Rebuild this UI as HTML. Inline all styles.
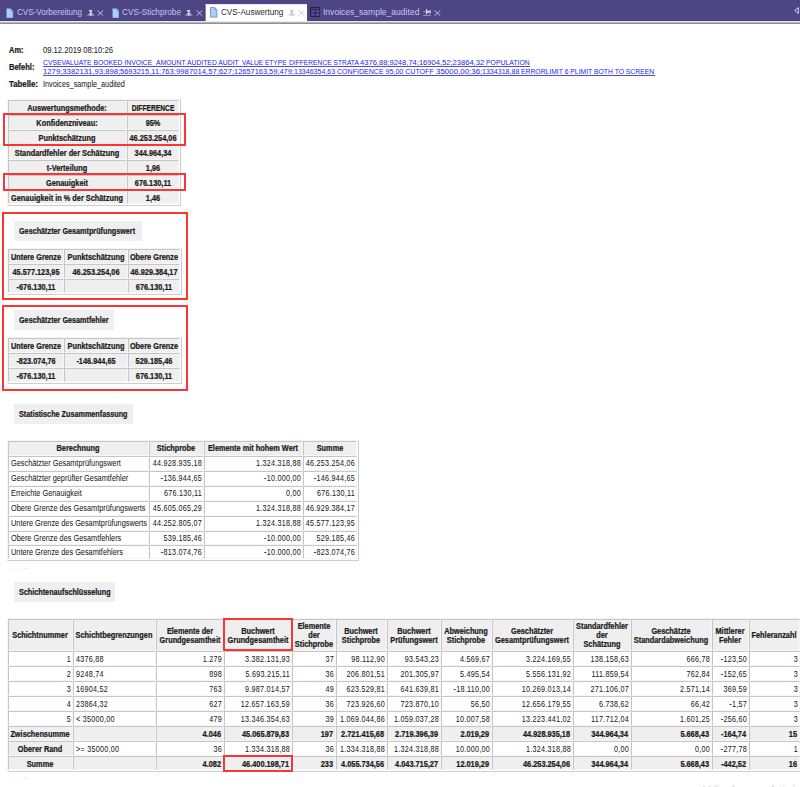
<!DOCTYPE html><html><head><meta charset="utf-8"><style>
html,body{margin:0;padding:0;background:#fff;width:800px;height:787px;overflow:hidden;position:relative}
.t{position:absolute;white-space:pre;font-family:"Liberation Sans",sans-serif;color:#1b1b1b}
.k{-webkit-text-stroke:0.24px currentColor}
.r{-webkit-text-stroke:0.04px currentColor}
.b{position:absolute;box-sizing:content-box}
svg{position:absolute}
</style></head><body>
<div class="b" style="left:0px;top:0px;width:800px;height:21px;background:#4e4584;"></div>
<div class="b" style="left:0px;top:20px;width:800px;height:1px;background:#473f7d;"></div>
<div class="b" style="left:0px;top:22px;width:800px;height:1px;background:#b4b4b4;"></div>
<div class="b" style="left:0px;top:23px;width:800px;height:1px;background:#8f8f8f;"></div>
<div class="b" style="left:205px;top:3.6px;width:102px;height:17.4px;background:#fff;border-left:1px solid #8a82b0;border-top:1px solid #e6e4ee;box-sizing:border-box;"></div>
<div class="b" style="left:0px;top:21px;width:800px;height:1px;background:#ebeaf0;"></div>
<svg style="left:6.40px;top:7.50px" width="7.5" height="10.6" viewBox="0 0 7.5 10.6"><path d="M0.5 0.5 H4.7 L7 2.8 V10.1 H0.5 Z" fill="#a9d1f5" stroke="#6c7cc0" stroke-width="0.75"/><path d="M4.6 0.6 V2.9 H6.9 Z" fill="#7d8cc8"/></svg>
<div class="t r" style="left:17px;top:6.95px;font-size:8.5px;line-height:10.20px;color:#c9c5ee;transform:scaleX(0.9486281377699942);transform-origin:0 0;-webkit-text-stroke:0;">CVS-Vorbereitung</div>
<svg style="left:86.6px;top:10px" width="8" height="6" viewBox="0 0 8 6"><path d="M1.7 0 H5.5 L4.7 1.7 H2.5 Z" fill="#d9d6ee"/><rect x="3" y="1.5" width="1.6" height="4.3" fill="#d9d6ee"/><path d="M2.2 2.9 H5.4 L7.9 5.8 H-0.3 Z" fill="#d9d6ee" opacity="0.55"/></svg>
<svg style="left:97.3px;top:9.60px" width="7" height="6.5" viewBox="0 0 7 6.5"><path d="M0.5 0.5 L6.3 5.8 M6.3 0.5 L0.5 5.8" stroke="#d9d6ee" stroke-width="1" opacity="0.85"/></svg>
<svg style="left:111.60px;top:7.50px" width="7.5" height="10.6" viewBox="0 0 7.5 10.6"><path d="M0.5 0.5 H4.7 L7 2.8 V10.1 H0.5 Z" fill="#a9d1f5" stroke="#6c7cc0" stroke-width="0.75"/><path d="M4.6 0.6 V2.9 H6.9 Z" fill="#7d8cc8"/></svg>
<div class="t r" style="left:122px;top:6.95px;font-size:8.5px;line-height:10.20px;color:#c9c5ee;transform:scaleX(0.9680065627563577);transform-origin:0 0;-webkit-text-stroke:0;">CVS-Stichprobe</div>
<svg style="left:185px;top:10px" width="8" height="6" viewBox="0 0 8 6"><path d="M1.7 0 H5.5 L4.7 1.7 H2.5 Z" fill="#d9d6ee"/><rect x="3" y="1.5" width="1.6" height="4.3" fill="#d9d6ee"/><path d="M2.2 2.9 H5.4 L7.9 5.8 H-0.3 Z" fill="#d9d6ee" opacity="0.55"/></svg>
<svg style="left:196px;top:9.60px" width="7" height="6.5" viewBox="0 0 7 6.5"><path d="M0.5 0.5 L6.3 5.8 M6.3 0.5 L0.5 5.8" stroke="#d9d6ee" stroke-width="1" opacity="0.85"/></svg>
<svg style="left:210.00px;top:7.30px" width="7.5" height="10.6" viewBox="0 0 7.5 10.6"><path d="M0.5 0.5 H4.7 L7 2.8 V10.1 H0.5 Z" fill="#a9d1f5" stroke="#6c7cc0" stroke-width="0.75"/><path d="M4.6 0.6 V2.9 H6.9 Z" fill="#7d8cc8"/></svg>
<div class="t r" style="left:220.8px;top:6.95px;font-size:8.5px;line-height:10.20px;color:#2c2c2c;transform:scaleX(0.9570552147239263);transform-origin:0 0;-webkit-text-stroke:0;">CVS-Auswertung</div>
<svg style="left:287.5px;top:10px" width="8" height="6" viewBox="0 0 8 6"><path d="M1.7 0 H5.5 L4.7 1.7 H2.5 Z" fill="#c4c4c4"/><rect x="3" y="1.5" width="1.6" height="4.3" fill="#c4c4c4"/><path d="M2.2 2.9 H5.4 L7.9 5.8 H-0.3 Z" fill="#c4c4c4" opacity="0.55"/></svg>
<svg style="left:298.2px;top:9.60px" width="7" height="6.5" viewBox="0 0 7 6.5"><path d="M0.5 0.5 L6.3 5.8 M6.3 0.5 L0.5 5.8" stroke="#c8c8c8" stroke-width="1" opacity="0.85"/></svg>
<svg style="left:309.8px;top:6.9px" width="10.5" height="10" viewBox="0 0 10.5 10"><rect x="0.6" y="0.6" width="9.3" height="8.8" rx="0.8" fill="#5a50a0" stroke="#26224a" stroke-width="1.1"/><path d="M0.6 2.6 H9.9 M0.6 6 H9.9 M5.25 2.6 V9.4" stroke="#26224a" stroke-width="1"/></svg>
<div class="t r" style="left:322.9px;top:6.95px;font-size:8.5px;line-height:10.20px;color:#c9c5ee;transform:scaleX(1.0047946633312488);transform-origin:0 0;-webkit-text-stroke:0;">Invoices_sample_audited</div>
<svg style="left:423px;top:9px" width="8" height="7" viewBox="0 0 8 7"><g fill="#dcdcec"><rect x="0" y="2.3" width="3" height="0.9" opacity="0.6"/><rect x="3" y="0" width="1.1" height="5"/><rect x="4" y="1.9" width="2.6" height="1.8"/><rect x="6.5" y="1" width="1.2" height="3.5"/><rect x="0.2" y="5.8" width="7.6" height="1" opacity="0.6"/></g></svg>
<svg style="left:434px;top:9.60px" width="7" height="6.5" viewBox="0 0 7 6.5"><path d="M0.5 0.5 L6.3 5.8 M6.3 0.5 L0.5 5.8" stroke="#d9d6ee" stroke-width="1" opacity="0.85"/></svg>
<svg style="left:793.5px;top:6.5px" width="5" height="7" viewBox="0 0 5 7"><path d="M4.3 0.6 V6.4 L0.7 3.5 Z" fill="none" stroke="#e8e6f4" stroke-width="0.9"/></svg>
<div class="t k" style="left:9px;top:46.04px;font-size:8.2px;line-height:9.84px;font-weight:700;transform:scaleX(0.9091479089598095);transform-origin:0 0;">Am:</div>
<div class="t r" style="left:42.5px;top:46.04px;font-size:8.2px;line-height:9.84px;color:#202020;transform:scaleX(0.9302912808449704);transform-origin:0 0;">09.12.2019 08:10:26</div>
<div class="t k" style="left:9px;top:63.04px;font-size:8.2px;line-height:9.84px;font-weight:700;transform:scaleX(0.9173321821713792);transform-origin:0 0;">Befehl:</div>
<div class="t r" style="left:42.75px;top:57.65px;font-size:7.5px;line-height:9.00px;color:#2626e6;transform:scaleX(0.9065606361829026);transform-origin:0 0;-webkit-text-stroke:0;">CVSEVALUATE BOOKED INVOICE_AMOUNT AUDITED AUDIT_</div>
<div class="t r" style="left:242.25px;top:57.65px;font-size:7.5px;line-height:9.00px;color:#2626e6;transform:scaleX(0.8778928677123413);transform-origin:0 0;-webkit-text-stroke:0;">VALUE ETYPE </div>
<div class="t r" style="left:288.6px;top:57.65px;font-size:7.5px;line-height:9.00px;color:#2626e6;transform:scaleX(0.8907602339181284);transform-origin:0 0;-webkit-text-stroke:0;">DIFFERENCE STRATA </div>
<div class="t r" style="left:360px;top:57.65px;font-size:7.5px;line-height:9.00px;color:#2626e6;transform:scaleX(1.008991008991009);transform-origin:0 0;-webkit-text-stroke:0;">4376,88;9248,74;16904,52;23864,32 </div>
<div class="t r" style="left:486.25px;top:57.65px;font-size:7.5px;line-height:9.00px;color:#2626e6;transform:scaleX(0.9153318077803204);transform-origin:0 0;-webkit-text-stroke:0;">POPULATION</div>
<div class="t r" style="left:42.75px;top:67.30px;font-size:7.5px;line-height:9.00px;color:#2626e6;transform:scaleX(1.0289281997918835);transform-origin:0 0;-webkit-text-stroke:0;">1279;3382131,93;898;</div>
<div class="t r" style="left:120px;top:67.30px;font-size:7.5px;line-height:9.00px;color:#2626e6;-webkit-text-stroke:0;">5693215,11;763;</div>
<div class="t r" style="left:175.8px;top:67.30px;font-size:7.5px;line-height:9.00px;color:#2626e6;transform:scaleX(1.0317425083240843);transform-origin:0 0;-webkit-text-stroke:0;">9987014,57;627;</div>
<div class="t r" style="left:233.9px;top:67.30px;font-size:7.5px;line-height:9.00px;color:#2626e6;transform:scaleX(0.989511754068716);transform-origin:0 0;-webkit-text-stroke:0;">12657163,59;479;</div>
<div class="t r" style="left:293.75px;top:67.30px;font-size:7.5px;line-height:9.00px;color:#2626e6;transform:scaleX(0.9402791964589713);transform-origin:0 0;-webkit-text-stroke:0;">13346354,63 </div>
<div class="t r" style="left:336.9px;top:67.30px;font-size:7.5px;line-height:9.00px;color:#2626e6;transform:scaleX(0.9409801876955166);transform-origin:0 0;-webkit-text-stroke:0;">CONFIDENCE 95,00 CUTOFF </div>
<div class="t r" style="left:435.6px;top:67.30px;font-size:7.5px;line-height:9.00px;color:#2626e6;transform:scaleX(1.0571530503032456);transform-origin:0 0;-webkit-text-stroke:0;">35000,00;36;</div>
<div class="t r" style="left:481.9px;top:67.30px;font-size:7.5px;line-height:9.00px;color:#2626e6;transform:scaleX(0.943220973782772);transform-origin:0 0;-webkit-text-stroke:0;">1334318,88 </div>
<div class="t r" style="left:521.25px;top:67.30px;font-size:7.5px;line-height:9.00px;color:#2626e6;transform:scaleX(0.9058786010417772);transform-origin:0 0;-webkit-text-stroke:0;">ERRORLIMIT 6 PLIMIT BOTH TO SCREEN</div>
<div class="b" style="left:43px;top:66px;width:487px;height:1px;background:#4a4af0;"></div>
<div class="b" style="left:43px;top:75px;width:611.5px;height:1px;background:#4a4af0;"></div>
<div class="t k" style="left:9px;top:80.04px;font-size:8.2px;line-height:9.84px;font-weight:700;transform:scaleX(0.9545439583950497);transform-origin:0 0;">Tabelle:</div>
<div class="t r" style="left:42.5px;top:80.04px;font-size:8.2px;line-height:9.84px;color:#202020;transform:scaleX(0.8861320336730174);transform-origin:0 0;">Invoices_sample_audited</div>
<div class="b" style="left:7px;top:99px;width:172px;height:105px;border-top:1px solid #f4f4f4;border-left:1px solid #f4f4f4;border-right:1px solid #cdcdcd;border-bottom:1px solid #cdcdcd;"></div>
<div class="b" style="left:8px;top:100px;width:117px;height:13px;background:#efefef;border-top:1px solid #c6c6c6;border-left:1px solid #c6c6c6;border-right:1px solid #f6f6f6;border-bottom:1px solid #f6f6f6;"></div>
<div class="t k" style="left:-233.00px;top:104.04px;font-size:8.2px;line-height:9.84px;font-weight:700;width:600px;text-align:center;transform:scaleX(0.8975609756097562);transform-origin:50% 0;">Auswertungsmethode:</div>
<div class="b" style="left:127px;top:100px;width:50px;height:13px;background:#efefef;border-top:1px solid #c6c6c6;border-left:1px solid #c6c6c6;border-right:1px solid #f6f6f6;border-bottom:1px solid #f6f6f6;"></div>
<div class="t k" style="left:-147.50px;top:104.04px;font-size:8.2px;line-height:9.84px;font-weight:700;width:600px;text-align:center;transform:scaleX(0.8167804878048782);transform-origin:50% 0;">DIFFERENCE</div>
<div class="b" style="left:8px;top:115px;width:117px;height:13px;background:#efefef;border-top:1px solid #c6c6c6;border-left:1px solid #c6c6c6;border-right:1px solid #f6f6f6;border-bottom:1px solid #f6f6f6;"></div>
<div class="t k" style="left:-233.00px;top:119.04px;font-size:8.2px;line-height:9.84px;font-weight:700;width:600px;text-align:center;transform:scaleX(0.8975609756097562);transform-origin:50% 0;">Konfidenzniveau:</div>
<div class="b" style="left:127px;top:115px;width:50px;height:13px;background:#efefef;border-top:1px solid #c6c6c6;border-left:1px solid #c6c6c6;border-right:1px solid #f6f6f6;border-bottom:1px solid #f6f6f6;"></div>
<div class="t k" style="left:-147.50px;top:119.04px;font-size:8.2px;line-height:9.84px;font-weight:700;width:600px;text-align:center;transform:scaleX(0.8975609756097562);transform-origin:50% 0;">95%</div>
<div class="b" style="left:8px;top:130px;width:117px;height:13px;background:#efefef;border-top:1px solid #c6c6c6;border-left:1px solid #c6c6c6;border-right:1px solid #f6f6f6;border-bottom:1px solid #f6f6f6;"></div>
<div class="t k" style="left:-233.00px;top:134.04px;font-size:8.2px;line-height:9.84px;font-weight:700;width:600px;text-align:center;transform:scaleX(0.8975609756097562);transform-origin:50% 0;">Punktschätzung</div>
<div class="b" style="left:127px;top:130px;width:50px;height:13px;background:#efefef;border-top:1px solid #c6c6c6;border-left:1px solid #c6c6c6;border-right:1px solid #f6f6f6;border-bottom:1px solid #f6f6f6;"></div>
<div class="t k" style="left:-147.50px;top:134.04px;font-size:8.2px;line-height:9.84px;font-weight:700;width:600px;text-align:center;transform:scaleX(0.8975609756097562);transform-origin:50% 0;">46.253.254,06</div>
<div class="b" style="left:8px;top:145px;width:117px;height:13px;background:#efefef;border-top:1px solid #c6c6c6;border-left:1px solid #c6c6c6;border-right:1px solid #f6f6f6;border-bottom:1px solid #f6f6f6;"></div>
<div class="t k" style="left:-233.00px;top:149.04px;font-size:8.2px;line-height:9.84px;font-weight:700;width:600px;text-align:center;transform:scaleX(0.8975609756097562);transform-origin:50% 0;">Standardfehler der Schätzung</div>
<div class="b" style="left:127px;top:145px;width:50px;height:13px;background:#efefef;border-top:1px solid #c6c6c6;border-left:1px solid #c6c6c6;border-right:1px solid #f6f6f6;border-bottom:1px solid #f6f6f6;"></div>
<div class="t k" style="left:-147.50px;top:149.04px;font-size:8.2px;line-height:9.84px;font-weight:700;width:600px;text-align:center;transform:scaleX(0.8975609756097562);transform-origin:50% 0;">344.964,34</div>
<div class="b" style="left:8px;top:160px;width:117px;height:13px;background:#efefef;border-top:1px solid #c6c6c6;border-left:1px solid #c6c6c6;border-right:1px solid #f6f6f6;border-bottom:1px solid #f6f6f6;"></div>
<div class="t k" style="left:-233.00px;top:164.04px;font-size:8.2px;line-height:9.84px;font-weight:700;width:600px;text-align:center;transform:scaleX(0.8975609756097562);transform-origin:50% 0;">t-Verteilung</div>
<div class="b" style="left:127px;top:160px;width:50px;height:13px;background:#efefef;border-top:1px solid #c6c6c6;border-left:1px solid #c6c6c6;border-right:1px solid #f6f6f6;border-bottom:1px solid #f6f6f6;"></div>
<div class="t k" style="left:-147.50px;top:164.04px;font-size:8.2px;line-height:9.84px;font-weight:700;width:600px;text-align:center;transform:scaleX(0.8975609756097562);transform-origin:50% 0;">1,96</div>
<div class="b" style="left:8px;top:175px;width:117px;height:13px;background:#efefef;border-top:1px solid #c6c6c6;border-left:1px solid #c6c6c6;border-right:1px solid #f6f6f6;border-bottom:1px solid #f6f6f6;"></div>
<div class="t k" style="left:-233.00px;top:179.04px;font-size:8.2px;line-height:9.84px;font-weight:700;width:600px;text-align:center;transform:scaleX(0.8975609756097562);transform-origin:50% 0;">Genauigkeit</div>
<div class="b" style="left:127px;top:175px;width:50px;height:13px;background:#efefef;border-top:1px solid #c6c6c6;border-left:1px solid #c6c6c6;border-right:1px solid #f6f6f6;border-bottom:1px solid #f6f6f6;"></div>
<div class="t k" style="left:-147.50px;top:179.04px;font-size:8.2px;line-height:9.84px;font-weight:700;width:600px;text-align:center;transform:scaleX(0.8975609756097562);transform-origin:50% 0;">676.130,11</div>
<div class="b" style="left:8px;top:190px;width:117px;height:12px;background:#efefef;border-top:1px solid #c6c6c6;border-left:1px solid #c6c6c6;border-right:1px solid #f6f6f6;border-bottom:1px solid #f6f6f6;"></div>
<div class="t k" style="left:-233.00px;top:194.04px;font-size:8.2px;line-height:9.84px;font-weight:700;width:600px;text-align:center;transform:scaleX(0.8975609756097562);transform-origin:50% 0;">Genauigkeit in % der Schätzung</div>
<div class="b" style="left:127px;top:190px;width:50px;height:12px;background:#efefef;border-top:1px solid #c6c6c6;border-left:1px solid #c6c6c6;border-right:1px solid #f6f6f6;border-bottom:1px solid #f6f6f6;"></div>
<div class="t k" style="left:-147.50px;top:194.04px;font-size:8.2px;line-height:9.84px;font-weight:700;width:600px;text-align:center;transform:scaleX(0.8975609756097562);transform-origin:50% 0;">1,46</div>
<div class="b" style="left:3px;top:113px;width:179px;height:29px;border:2px solid #fb3434;"></div>
<div class="b" style="left:3px;top:173px;width:179px;height:14px;border:2px solid #fb3434;"></div>
<div class="b" style="left:2px;top:212px;width:182px;height:84px;border:2px solid #fb3434;"></div>
<div class="b" style="left:14px;top:221px;width:128px;height:20px;background:#efefef;"></div>
<div class="t k" style="left:19px;top:227.04px;font-size:8.2px;line-height:9.84px;font-weight:700;transform:scaleX(0.8829268292682928);transform-origin:0 0;">Geschätzter Gesamtprüfungswert</div>
<div class="b" style="left:7px;top:248px;width:173px;height:45px;border-top:1px solid #f4f4f4;border-left:1px solid #f4f4f4;border-right:1px solid #cdcdcd;border-bottom:1px solid #cdcdcd;"></div>
<div class="b" style="left:8px;top:249px;width:54px;height:13px;background:#efefef;border-top:1px solid #c6c6c6;border-left:1px solid #c6c6c6;border-right:1px solid #f6f6f6;border-bottom:1px solid #f6f6f6;"></div>
<div class="t k" style="left:-264.50px;top:253.04px;font-size:8.2px;line-height:9.84px;font-weight:700;width:600px;text-align:center;transform:scaleX(0.8975609756097562);transform-origin:50% 0;">Untere Grenze</div>
<div class="b" style="left:64px;top:249px;width:62px;height:13px;background:#efefef;border-top:1px solid #c6c6c6;border-left:1px solid #c6c6c6;border-right:1px solid #f6f6f6;border-bottom:1px solid #f6f6f6;"></div>
<div class="t k" style="left:-204.50px;top:253.04px;font-size:8.2px;line-height:9.84px;font-weight:700;width:600px;text-align:center;transform:scaleX(0.8975609756097562);transform-origin:50% 0;">Punktschätzung</div>
<div class="b" style="left:128px;top:249px;width:50px;height:13px;background:#efefef;border-top:1px solid #c6c6c6;border-left:1px solid #c6c6c6;border-right:1px solid #f6f6f6;border-bottom:1px solid #f6f6f6;"></div>
<div class="t k" style="left:-146.50px;top:253.04px;font-size:8.2px;line-height:9.84px;font-weight:700;width:600px;text-align:center;transform:scaleX(0.8975609756097562);transform-origin:50% 0;">Obere Grenze</div>
<div class="b" style="left:8px;top:264px;width:54px;height:13px;background:#efefef;border-top:1px solid #c6c6c6;border-left:1px solid #c6c6c6;border-right:1px solid #f6f6f6;border-bottom:1px solid #f6f6f6;"></div>
<div class="t k" style="left:-264.50px;top:268.04px;font-size:8.2px;line-height:9.84px;font-weight:700;width:600px;text-align:center;transform:scaleX(0.8975609756097562);transform-origin:50% 0;">45.577.123,95</div>
<div class="b" style="left:64px;top:264px;width:62px;height:13px;background:#efefef;border-top:1px solid #c6c6c6;border-left:1px solid #c6c6c6;border-right:1px solid #f6f6f6;border-bottom:1px solid #f6f6f6;"></div>
<div class="t k" style="left:-204.50px;top:268.04px;font-size:8.2px;line-height:9.84px;font-weight:700;width:600px;text-align:center;transform:scaleX(0.8975609756097562);transform-origin:50% 0;">46.253.254,06</div>
<div class="b" style="left:128px;top:264px;width:50px;height:13px;background:#efefef;border-top:1px solid #c6c6c6;border-left:1px solid #c6c6c6;border-right:1px solid #f6f6f6;border-bottom:1px solid #f6f6f6;"></div>
<div class="t k" style="left:-146.50px;top:268.04px;font-size:8.2px;line-height:9.84px;font-weight:700;width:600px;text-align:center;transform:scaleX(0.8975609756097562);transform-origin:50% 0;">46.929.384,17</div>
<div class="b" style="left:8px;top:279px;width:54px;height:12px;background:#efefef;border-top:1px solid #c6c6c6;border-left:1px solid #c6c6c6;border-right:1px solid #f6f6f6;border-bottom:1px solid #f6f6f6;"></div>
<div class="t k" style="left:-264.50px;top:283.04px;font-size:8.2px;line-height:9.84px;font-weight:700;width:600px;text-align:center;transform:scaleX(0.8975609756097562);transform-origin:50% 0;">-676.130,11</div>
<div class="b" style="left:64px;top:279px;width:62px;height:12px;background:#efefef;border-top:1px solid #c6c6c6;border-left:1px solid #c6c6c6;border-right:1px solid #f6f6f6;border-bottom:1px solid #f6f6f6;"></div>
<div class="b" style="left:128px;top:279px;width:50px;height:12px;background:#efefef;border-top:1px solid #c6c6c6;border-left:1px solid #c6c6c6;border-right:1px solid #f6f6f6;border-bottom:1px solid #f6f6f6;"></div>
<div class="t k" style="left:-146.50px;top:283.04px;font-size:8.2px;line-height:9.84px;font-weight:700;width:600px;text-align:center;transform:scaleX(0.8975609756097562);transform-origin:50% 0;">676.130,11</div>
<div class="b" style="left:2px;top:305px;width:182px;height:82px;border:2px solid #fb3434;"></div>
<div class="b" style="left:14px;top:310px;width:100px;height:19.5px;background:#efefef;"></div>
<div class="t k" style="left:19px;top:316.04px;font-size:8.2px;line-height:9.84px;font-weight:700;transform:scaleX(0.8829268292682928);transform-origin:0 0;">Geschätzter Gesamtfehler</div>
<div class="b" style="left:7px;top:337px;width:173px;height:45px;border-top:1px solid #f4f4f4;border-left:1px solid #f4f4f4;border-right:1px solid #cdcdcd;border-bottom:1px solid #cdcdcd;"></div>
<div class="b" style="left:8px;top:338px;width:54px;height:13px;background:#efefef;border-top:1px solid #c6c6c6;border-left:1px solid #c6c6c6;border-right:1px solid #f6f6f6;border-bottom:1px solid #f6f6f6;"></div>
<div class="t k" style="left:-264.50px;top:342.04px;font-size:8.2px;line-height:9.84px;font-weight:700;width:600px;text-align:center;transform:scaleX(0.8975609756097562);transform-origin:50% 0;">Untere Grenze</div>
<div class="b" style="left:64px;top:338px;width:62px;height:13px;background:#efefef;border-top:1px solid #c6c6c6;border-left:1px solid #c6c6c6;border-right:1px solid #f6f6f6;border-bottom:1px solid #f6f6f6;"></div>
<div class="t k" style="left:-204.50px;top:342.04px;font-size:8.2px;line-height:9.84px;font-weight:700;width:600px;text-align:center;transform:scaleX(0.8975609756097562);transform-origin:50% 0;">Punktschätzung</div>
<div class="b" style="left:128px;top:338px;width:50px;height:13px;background:#efefef;border-top:1px solid #c6c6c6;border-left:1px solid #c6c6c6;border-right:1px solid #f6f6f6;border-bottom:1px solid #f6f6f6;"></div>
<div class="t k" style="left:-146.50px;top:342.04px;font-size:8.2px;line-height:9.84px;font-weight:700;width:600px;text-align:center;transform:scaleX(0.8975609756097562);transform-origin:50% 0;">Obere Grenze</div>
<div class="b" style="left:8px;top:353px;width:54px;height:13px;background:#efefef;border-top:1px solid #c6c6c6;border-left:1px solid #c6c6c6;border-right:1px solid #f6f6f6;border-bottom:1px solid #f6f6f6;"></div>
<div class="t k" style="left:-264.50px;top:357.04px;font-size:8.2px;line-height:9.84px;font-weight:700;width:600px;text-align:center;transform:scaleX(0.8975609756097562);transform-origin:50% 0;">-823.074,76</div>
<div class="b" style="left:64px;top:353px;width:62px;height:13px;background:#efefef;border-top:1px solid #c6c6c6;border-left:1px solid #c6c6c6;border-right:1px solid #f6f6f6;border-bottom:1px solid #f6f6f6;"></div>
<div class="t k" style="left:-204.50px;top:357.04px;font-size:8.2px;line-height:9.84px;font-weight:700;width:600px;text-align:center;transform:scaleX(0.8975609756097562);transform-origin:50% 0;">-146.944,65</div>
<div class="b" style="left:128px;top:353px;width:50px;height:13px;background:#efefef;border-top:1px solid #c6c6c6;border-left:1px solid #c6c6c6;border-right:1px solid #f6f6f6;border-bottom:1px solid #f6f6f6;"></div>
<div class="t k" style="left:-146.50px;top:357.04px;font-size:8.2px;line-height:9.84px;font-weight:700;width:600px;text-align:center;transform:scaleX(0.8975609756097562);transform-origin:50% 0;">529.185,46</div>
<div class="b" style="left:8px;top:368px;width:54px;height:12px;background:#efefef;border-top:1px solid #c6c6c6;border-left:1px solid #c6c6c6;border-right:1px solid #f6f6f6;border-bottom:1px solid #f6f6f6;"></div>
<div class="t k" style="left:-264.50px;top:372.04px;font-size:8.2px;line-height:9.84px;font-weight:700;width:600px;text-align:center;transform:scaleX(0.8975609756097562);transform-origin:50% 0;">-676.130,11</div>
<div class="b" style="left:64px;top:368px;width:62px;height:12px;background:#efefef;border-top:1px solid #c6c6c6;border-left:1px solid #c6c6c6;border-right:1px solid #f6f6f6;border-bottom:1px solid #f6f6f6;"></div>
<div class="b" style="left:128px;top:368px;width:50px;height:12px;background:#efefef;border-top:1px solid #c6c6c6;border-left:1px solid #c6c6c6;border-right:1px solid #f6f6f6;border-bottom:1px solid #f6f6f6;"></div>
<div class="t k" style="left:-146.50px;top:372.04px;font-size:8.2px;line-height:9.84px;font-weight:700;width:600px;text-align:center;transform:scaleX(0.8975609756097562);transform-origin:50% 0;">676.130,11</div>
<div class="b" style="left:14px;top:404px;width:119px;height:20px;background:#efefef;"></div>
<div class="t k" style="left:19px;top:410.04px;font-size:8.2px;line-height:9.84px;font-weight:700;transform:scaleX(0.8829268292682928);transform-origin:0 0;">Statistische Zusammenfassung</div>
<div class="b" style="left:7px;top:440px;width:350px;height:119px;border-top:1px solid #f4f4f4;border-left:1px solid #f4f4f4;border-right:1px solid #cdcdcd;border-bottom:1px solid #cdcdcd;"></div>
<div class="b" style="left:8px;top:441px;width:139px;height:13px;background:#efefef;border-top:1px solid #c6c6c6;border-left:1px solid #c6c6c6;border-right:1px solid #f6f6f6;border-bottom:1px solid #f6f6f6;"></div>
<div class="t k" style="left:-222.00px;top:444.04px;font-size:8.2px;line-height:9.84px;font-weight:700;width:600px;text-align:center;transform:scaleX(0.8975609756097562);transform-origin:50% 0;">Berechnung</div>
<div class="b" style="left:149px;top:441px;width:53px;height:13px;background:#efefef;border-top:1px solid #c6c6c6;border-left:1px solid #c6c6c6;border-right:1px solid #f6f6f6;border-bottom:1px solid #f6f6f6;"></div>
<div class="t k" style="left:-124.00px;top:444.04px;font-size:8.2px;line-height:9.84px;font-weight:700;width:600px;text-align:center;transform:scaleX(0.8975609756097562);transform-origin:50% 0;">Stichprobe</div>
<div class="b" style="left:204px;top:441px;width:97px;height:13px;background:#efefef;border-top:1px solid #c6c6c6;border-left:1px solid #c6c6c6;border-right:1px solid #f6f6f6;border-bottom:1px solid #f6f6f6;"></div>
<div class="t k" style="left:-47.00px;top:444.04px;font-size:8.2px;line-height:9.84px;font-weight:700;width:600px;text-align:center;transform:scaleX(0.8975609756097562);transform-origin:50% 0;">Elemente mit hohem Wert</div>
<div class="b" style="left:303px;top:441px;width:52px;height:13px;background:#efefef;border-top:1px solid #c6c6c6;border-left:1px solid #c6c6c6;border-right:1px solid #f6f6f6;border-bottom:1px solid #f6f6f6;"></div>
<div class="t k" style="left:29.50px;top:444.04px;font-size:8.2px;line-height:9.84px;font-weight:700;width:600px;text-align:center;transform:scaleX(0.8975609756097562);transform-origin:50% 0;">Summe</div>
<div class="b" style="left:8px;top:456px;width:139px;height:13px;background:#ffffff;border-top:1px solid #c6c6c6;border-left:1px solid #c6c6c6;border-right:1px solid #f6f6f6;border-bottom:1px solid #f6f6f6;"></div>
<div class="t r" style="left:10.5px;top:459.04px;font-size:8.2px;line-height:9.84px;color:#202020;transform:scaleX(0.8975609756097562);transform-origin:0 0;">Geschätzter Gesamtprüfungswert</div>
<div class="b" style="left:149px;top:456px;width:53px;height:13px;background:#ffffff;border-top:1px solid #c6c6c6;border-left:1px solid #c6c6c6;border-right:1px solid #f6f6f6;border-bottom:1px solid #f6f6f6;"></div>
<div class="t r" style="left:-398.24px;top:459.04px;font-size:8.2px;line-height:9.84px;color:#202020;width:600px;text-align:right;transform:scaleX(0.8772727272727273);transform-origin:100% 0;letter-spacing:0.3px;">44.928.935,18</div>
<div class="b" style="left:204px;top:456px;width:97px;height:13px;background:#ffffff;border-top:1px solid #c6c6c6;border-left:1px solid #c6c6c6;border-right:1px solid #f6f6f6;border-bottom:1px solid #f6f6f6;"></div>
<div class="t r" style="left:-299.24px;top:459.04px;font-size:8.2px;line-height:9.84px;color:#202020;width:600px;text-align:right;transform:scaleX(0.8772727272727273);transform-origin:100% 0;letter-spacing:0.3px;">1.324.318,88</div>
<div class="b" style="left:303px;top:456px;width:52px;height:13px;background:#ffffff;border-top:1px solid #c6c6c6;border-left:1px solid #c6c6c6;border-right:1px solid #f6f6f6;border-bottom:1px solid #f6f6f6;"></div>
<div class="t r" style="left:-245.24px;top:459.04px;font-size:8.2px;line-height:9.84px;color:#202020;width:600px;text-align:right;transform:scaleX(0.8772727272727273);transform-origin:100% 0;letter-spacing:0.3px;">46.253.254,06</div>
<div class="b" style="left:8px;top:471px;width:139px;height:13px;background:#ffffff;border-top:1px solid #c6c6c6;border-left:1px solid #c6c6c6;border-right:1px solid #f6f6f6;border-bottom:1px solid #f6f6f6;"></div>
<div class="t r" style="left:10.5px;top:474.04px;font-size:8.2px;line-height:9.84px;color:#202020;transform:scaleX(0.8975609756097562);transform-origin:0 0;">Geschätzter geprüfter Gesamtfehler</div>
<div class="b" style="left:149px;top:471px;width:53px;height:13px;background:#ffffff;border-top:1px solid #c6c6c6;border-left:1px solid #c6c6c6;border-right:1px solid #f6f6f6;border-bottom:1px solid #f6f6f6;"></div>
<div class="t r" style="left:-398.24px;top:474.04px;font-size:8.2px;line-height:9.84px;color:#202020;width:600px;text-align:right;transform:scaleX(0.8772727272727274);transform-origin:100% 0;letter-spacing:0.3px;">-136.944,65</div>
<div class="b" style="left:204px;top:471px;width:97px;height:13px;background:#ffffff;border-top:1px solid #c6c6c6;border-left:1px solid #c6c6c6;border-right:1px solid #f6f6f6;border-bottom:1px solid #f6f6f6;"></div>
<div class="t r" style="left:-299.24px;top:474.04px;font-size:8.2px;line-height:9.84px;color:#202020;width:600px;text-align:right;transform:scaleX(0.8772727272727273);transform-origin:100% 0;letter-spacing:0.3px;">-10.000,00</div>
<div class="b" style="left:303px;top:471px;width:52px;height:13px;background:#ffffff;border-top:1px solid #c6c6c6;border-left:1px solid #c6c6c6;border-right:1px solid #f6f6f6;border-bottom:1px solid #f6f6f6;"></div>
<div class="t r" style="left:-245.24px;top:474.04px;font-size:8.2px;line-height:9.84px;color:#202020;width:600px;text-align:right;transform:scaleX(0.8772727272727274);transform-origin:100% 0;letter-spacing:0.3px;">-146.944,65</div>
<div class="b" style="left:8px;top:486px;width:139px;height:13px;background:#ffffff;border-top:1px solid #c6c6c6;border-left:1px solid #c6c6c6;border-right:1px solid #f6f6f6;border-bottom:1px solid #f6f6f6;"></div>
<div class="t r" style="left:10.5px;top:489.04px;font-size:8.2px;line-height:9.84px;color:#202020;transform:scaleX(0.8975609756097562);transform-origin:0 0;">Erreichte Genauigkeit</div>
<div class="b" style="left:149px;top:486px;width:53px;height:13px;background:#ffffff;border-top:1px solid #c6c6c6;border-left:1px solid #c6c6c6;border-right:1px solid #f6f6f6;border-bottom:1px solid #f6f6f6;"></div>
<div class="t r" style="left:-398.24px;top:489.04px;font-size:8.2px;line-height:9.84px;color:#202020;width:600px;text-align:right;transform:scaleX(0.8772727272727273);transform-origin:100% 0;letter-spacing:0.3px;">676.130,11</div>
<div class="b" style="left:204px;top:486px;width:97px;height:13px;background:#ffffff;border-top:1px solid #c6c6c6;border-left:1px solid #c6c6c6;border-right:1px solid #f6f6f6;border-bottom:1px solid #f6f6f6;"></div>
<div class="t r" style="left:-299.24px;top:489.04px;font-size:8.2px;line-height:9.84px;color:#202020;width:600px;text-align:right;transform:scaleX(0.8772727272727273);transform-origin:100% 0;letter-spacing:0.3px;">0,00</div>
<div class="b" style="left:303px;top:486px;width:52px;height:13px;background:#ffffff;border-top:1px solid #c6c6c6;border-left:1px solid #c6c6c6;border-right:1px solid #f6f6f6;border-bottom:1px solid #f6f6f6;"></div>
<div class="t r" style="left:-245.24px;top:489.04px;font-size:8.2px;line-height:9.84px;color:#202020;width:600px;text-align:right;transform:scaleX(0.8772727272727273);transform-origin:100% 0;letter-spacing:0.3px;">676.130,11</div>
<div class="b" style="left:8px;top:501px;width:139px;height:13px;background:#ffffff;border-top:1px solid #c6c6c6;border-left:1px solid #c6c6c6;border-right:1px solid #f6f6f6;border-bottom:1px solid #f6f6f6;"></div>
<div class="t r" style="left:10.5px;top:504.04px;font-size:8.2px;line-height:9.84px;color:#202020;transform:scaleX(0.8975609756097562);transform-origin:0 0;">Obere Grenze des Gesamtprüfungswerts</div>
<div class="b" style="left:149px;top:501px;width:53px;height:13px;background:#ffffff;border-top:1px solid #c6c6c6;border-left:1px solid #c6c6c6;border-right:1px solid #f6f6f6;border-bottom:1px solid #f6f6f6;"></div>
<div class="t r" style="left:-398.24px;top:504.04px;font-size:8.2px;line-height:9.84px;color:#202020;width:600px;text-align:right;transform:scaleX(0.8772727272727273);transform-origin:100% 0;letter-spacing:0.3px;">45.605.065,29</div>
<div class="b" style="left:204px;top:501px;width:97px;height:13px;background:#ffffff;border-top:1px solid #c6c6c6;border-left:1px solid #c6c6c6;border-right:1px solid #f6f6f6;border-bottom:1px solid #f6f6f6;"></div>
<div class="t r" style="left:-299.24px;top:504.04px;font-size:8.2px;line-height:9.84px;color:#202020;width:600px;text-align:right;transform:scaleX(0.8772727272727273);transform-origin:100% 0;letter-spacing:0.3px;">1.324.318,88</div>
<div class="b" style="left:303px;top:501px;width:52px;height:13px;background:#ffffff;border-top:1px solid #c6c6c6;border-left:1px solid #c6c6c6;border-right:1px solid #f6f6f6;border-bottom:1px solid #f6f6f6;"></div>
<div class="t r" style="left:-245.24px;top:504.04px;font-size:8.2px;line-height:9.84px;color:#202020;width:600px;text-align:right;transform:scaleX(0.8772727272727273);transform-origin:100% 0;letter-spacing:0.3px;">46.929.384,17</div>
<div class="b" style="left:8px;top:516px;width:139px;height:13px;background:#ffffff;border-top:1px solid #c6c6c6;border-left:1px solid #c6c6c6;border-right:1px solid #f6f6f6;border-bottom:1px solid #f6f6f6;"></div>
<div class="t r" style="left:10.5px;top:519.04px;font-size:8.2px;line-height:9.84px;color:#202020;transform:scaleX(0.8975609756097562);transform-origin:0 0;">Untere Grenze des Gesamtprüfungswerts</div>
<div class="b" style="left:149px;top:516px;width:53px;height:13px;background:#ffffff;border-top:1px solid #c6c6c6;border-left:1px solid #c6c6c6;border-right:1px solid #f6f6f6;border-bottom:1px solid #f6f6f6;"></div>
<div class="t r" style="left:-398.24px;top:519.04px;font-size:8.2px;line-height:9.84px;color:#202020;width:600px;text-align:right;transform:scaleX(0.8772727272727273);transform-origin:100% 0;letter-spacing:0.3px;">44.252.805,07</div>
<div class="b" style="left:204px;top:516px;width:97px;height:13px;background:#ffffff;border-top:1px solid #c6c6c6;border-left:1px solid #c6c6c6;border-right:1px solid #f6f6f6;border-bottom:1px solid #f6f6f6;"></div>
<div class="t r" style="left:-299.24px;top:519.04px;font-size:8.2px;line-height:9.84px;color:#202020;width:600px;text-align:right;transform:scaleX(0.8772727272727273);transform-origin:100% 0;letter-spacing:0.3px;">1.324.318,88</div>
<div class="b" style="left:303px;top:516px;width:52px;height:13px;background:#ffffff;border-top:1px solid #c6c6c6;border-left:1px solid #c6c6c6;border-right:1px solid #f6f6f6;border-bottom:1px solid #f6f6f6;"></div>
<div class="t r" style="left:-245.24px;top:519.04px;font-size:8.2px;line-height:9.84px;color:#202020;width:600px;text-align:right;transform:scaleX(0.8772727272727273);transform-origin:100% 0;letter-spacing:0.3px;">45.577.123,95</div>
<div class="b" style="left:8px;top:531px;width:139px;height:12px;background:#ffffff;border-top:1px solid #c6c6c6;border-left:1px solid #c6c6c6;border-right:1px solid #f6f6f6;border-bottom:1px solid #f6f6f6;"></div>
<div class="t r" style="left:10.5px;top:533.54px;font-size:8.2px;line-height:9.84px;color:#202020;transform:scaleX(0.8975609756097562);transform-origin:0 0;">Obere Grenze des Gesamtfehlers</div>
<div class="b" style="left:149px;top:531px;width:53px;height:12px;background:#ffffff;border-top:1px solid #c6c6c6;border-left:1px solid #c6c6c6;border-right:1px solid #f6f6f6;border-bottom:1px solid #f6f6f6;"></div>
<div class="t r" style="left:-398.24px;top:533.54px;font-size:8.2px;line-height:9.84px;color:#202020;width:600px;text-align:right;transform:scaleX(0.8772727272727273);transform-origin:100% 0;letter-spacing:0.3px;">539.185,46</div>
<div class="b" style="left:204px;top:531px;width:97px;height:12px;background:#ffffff;border-top:1px solid #c6c6c6;border-left:1px solid #c6c6c6;border-right:1px solid #f6f6f6;border-bottom:1px solid #f6f6f6;"></div>
<div class="t r" style="left:-299.24px;top:533.54px;font-size:8.2px;line-height:9.84px;color:#202020;width:600px;text-align:right;transform:scaleX(0.8772727272727273);transform-origin:100% 0;letter-spacing:0.3px;">-10.000,00</div>
<div class="b" style="left:303px;top:531px;width:52px;height:12px;background:#ffffff;border-top:1px solid #c6c6c6;border-left:1px solid #c6c6c6;border-right:1px solid #f6f6f6;border-bottom:1px solid #f6f6f6;"></div>
<div class="t r" style="left:-245.24px;top:533.54px;font-size:8.2px;line-height:9.84px;color:#202020;width:600px;text-align:right;transform:scaleX(0.8772727272727273);transform-origin:100% 0;letter-spacing:0.3px;">529.185,46</div>
<div class="b" style="left:8px;top:545px;width:139px;height:12px;background:#ffffff;border-top:1px solid #c6c6c6;border-left:1px solid #c6c6c6;border-right:1px solid #f6f6f6;border-bottom:1px solid #f6f6f6;"></div>
<div class="t r" style="left:10.5px;top:548.04px;font-size:8.2px;line-height:9.84px;color:#202020;transform:scaleX(0.8975609756097562);transform-origin:0 0;">Untere Grenze des Gesamtfehlers</div>
<div class="b" style="left:149px;top:545px;width:53px;height:12px;background:#ffffff;border-top:1px solid #c6c6c6;border-left:1px solid #c6c6c6;border-right:1px solid #f6f6f6;border-bottom:1px solid #f6f6f6;"></div>
<div class="t r" style="left:-398.24px;top:548.04px;font-size:8.2px;line-height:9.84px;color:#202020;width:600px;text-align:right;transform:scaleX(0.8772727272727274);transform-origin:100% 0;letter-spacing:0.3px;">-813.074,76</div>
<div class="b" style="left:204px;top:545px;width:97px;height:12px;background:#ffffff;border-top:1px solid #c6c6c6;border-left:1px solid #c6c6c6;border-right:1px solid #f6f6f6;border-bottom:1px solid #f6f6f6;"></div>
<div class="t r" style="left:-299.24px;top:548.04px;font-size:8.2px;line-height:9.84px;color:#202020;width:600px;text-align:right;transform:scaleX(0.8772727272727273);transform-origin:100% 0;letter-spacing:0.3px;">-10.000,00</div>
<div class="b" style="left:303px;top:545px;width:52px;height:12px;background:#ffffff;border-top:1px solid #c6c6c6;border-left:1px solid #c6c6c6;border-right:1px solid #f6f6f6;border-bottom:1px solid #f6f6f6;"></div>
<div class="t r" style="left:-245.24px;top:548.04px;font-size:8.2px;line-height:9.84px;color:#202020;width:600px;text-align:right;transform:scaleX(0.8772727272727274);transform-origin:100% 0;letter-spacing:0.3px;">-823.074,76</div>
<div class="b" style="left:14px;top:582px;width:101px;height:20px;background:#efefef;"></div>
<div class="t k" style="left:19px;top:588.04px;font-size:8.2px;line-height:9.84px;font-weight:700;transform:scaleX(0.8829268292682928);transform-origin:0 0;">Schichtenaufschlüsselung</div>
<div class="b" style="left:7px;top:618px;width:793px;height:152px;border-top:1px solid #f4f4f4;border-left:1px solid #f4f4f4;border-right:1px solid #cdcdcd;border-bottom:1px solid #cdcdcd;"></div>
<div class="b" style="left:8px;top:619px;width:63px;height:30px;background:#efefef;border-top:1px solid #c6c6c6;border-left:1px solid #c6c6c6;border-right:1px solid #f6f6f6;border-bottom:1px solid #f6f6f6;"></div>
<div class="t k" style="left:-260.00px;top:631.04px;font-size:8.2px;line-height:9.84px;font-weight:700;width:600px;text-align:center;transform:scaleX(0.8975609756097562);transform-origin:50% 0;">Schichtnummer</div>
<div class="b" style="left:73px;top:619px;width:81px;height:30px;background:#efefef;border-top:1px solid #c6c6c6;border-left:1px solid #c6c6c6;border-right:1px solid #f6f6f6;border-bottom:1px solid #f6f6f6;"></div>
<div class="t k" style="left:-186.00px;top:631.04px;font-size:8.2px;line-height:9.84px;font-weight:700;width:600px;text-align:center;transform:scaleX(0.8975609756097562);transform-origin:50% 0;">Schichtbegrenzungen</div>
<div class="b" style="left:156px;top:619px;width:66px;height:30px;background:#efefef;border-top:1px solid #c6c6c6;border-left:1px solid #c6c6c6;border-right:1px solid #f6f6f6;border-bottom:1px solid #f6f6f6;"></div>
<div class="t k" style="left:-110.50px;top:626.54px;font-size:8.2px;line-height:9.84px;font-weight:700;width:600px;text-align:center;transform:scaleX(0.8975609756097562);transform-origin:50% 0;">Elemente der</div>
<div class="t k" style="left:-110.50px;top:635.54px;font-size:8.2px;line-height:9.84px;font-weight:700;width:600px;text-align:center;transform:scaleX(0.8975609756097562);transform-origin:50% 0;">Grundgesamtheit</div>
<div class="b" style="left:224px;top:619px;width:66px;height:30px;background:#efefef;border-top:1px solid #c6c6c6;border-left:1px solid #c6c6c6;border-right:1px solid #f6f6f6;border-bottom:1px solid #f6f6f6;"></div>
<div class="t k" style="left:-42.50px;top:626.54px;font-size:8.2px;line-height:9.84px;font-weight:700;width:600px;text-align:center;transform:scaleX(0.8975609756097562);transform-origin:50% 0;">Buchwert</div>
<div class="t k" style="left:-42.50px;top:635.54px;font-size:8.2px;line-height:9.84px;font-weight:700;width:600px;text-align:center;transform:scaleX(0.8975609756097562);transform-origin:50% 0;">Grundgesamtheit</div>
<div class="b" style="left:292px;top:619px;width:42px;height:30px;background:#efefef;border-top:1px solid #c6c6c6;border-left:1px solid #c6c6c6;border-right:1px solid #f6f6f6;border-bottom:1px solid #f6f6f6;"></div>
<div class="t k" style="left:13.50px;top:622.04px;font-size:8.2px;line-height:9.84px;font-weight:700;width:600px;text-align:center;transform:scaleX(0.8975609756097562);transform-origin:50% 0;">Elemente</div>
<div class="t k" style="left:13.50px;top:631.04px;font-size:8.2px;line-height:9.84px;font-weight:700;width:600px;text-align:center;transform:scaleX(0.8975609756097562);transform-origin:50% 0;">der</div>
<div class="t k" style="left:13.50px;top:640.04px;font-size:8.2px;line-height:9.84px;font-weight:700;width:600px;text-align:center;transform:scaleX(0.8975609756097562);transform-origin:50% 0;">Stichprobe</div>
<div class="b" style="left:336px;top:619px;width:49px;height:30px;background:#efefef;border-top:1px solid #c6c6c6;border-left:1px solid #c6c6c6;border-right:1px solid #f6f6f6;border-bottom:1px solid #f6f6f6;"></div>
<div class="t k" style="left:61.00px;top:626.54px;font-size:8.2px;line-height:9.84px;font-weight:700;width:600px;text-align:center;transform:scaleX(0.8975609756097562);transform-origin:50% 0;">Buchwert</div>
<div class="t k" style="left:61.00px;top:635.54px;font-size:8.2px;line-height:9.84px;font-weight:700;width:600px;text-align:center;transform:scaleX(0.8975609756097562);transform-origin:50% 0;">Stichprobe</div>
<div class="b" style="left:387px;top:619px;width:52px;height:30px;background:#efefef;border-top:1px solid #c6c6c6;border-left:1px solid #c6c6c6;border-right:1px solid #f6f6f6;border-bottom:1px solid #f6f6f6;"></div>
<div class="t k" style="left:113.50px;top:626.54px;font-size:8.2px;line-height:9.84px;font-weight:700;width:600px;text-align:center;transform:scaleX(0.8975609756097562);transform-origin:50% 0;">Buchwert</div>
<div class="t k" style="left:113.50px;top:635.54px;font-size:8.2px;line-height:9.84px;font-weight:700;width:600px;text-align:center;transform:scaleX(0.8975609756097562);transform-origin:50% 0;">Prüfungswert</div>
<div class="b" style="left:441px;top:619px;width:49px;height:30px;background:#efefef;border-top:1px solid #c6c6c6;border-left:1px solid #c6c6c6;border-right:1px solid #f6f6f6;border-bottom:1px solid #f6f6f6;"></div>
<div class="t k" style="left:166.00px;top:626.54px;font-size:8.2px;line-height:9.84px;font-weight:700;width:600px;text-align:center;transform:scaleX(0.8975609756097562);transform-origin:50% 0;">Abweichung</div>
<div class="t k" style="left:166.00px;top:635.54px;font-size:8.2px;line-height:9.84px;font-weight:700;width:600px;text-align:center;transform:scaleX(0.8975609756097562);transform-origin:50% 0;">Stichprobe</div>
<div class="b" style="left:492px;top:619px;width:79px;height:30px;background:#efefef;border-top:1px solid #c6c6c6;border-left:1px solid #c6c6c6;border-right:1px solid #f6f6f6;border-bottom:1px solid #f6f6f6;"></div>
<div class="t k" style="left:232.00px;top:626.54px;font-size:8.2px;line-height:9.84px;font-weight:700;width:600px;text-align:center;transform:scaleX(0.8975609756097562);transform-origin:50% 0;">Geschätzter</div>
<div class="t k" style="left:232.00px;top:635.54px;font-size:8.2px;line-height:9.84px;font-weight:700;width:600px;text-align:center;transform:scaleX(0.8975609756097562);transform-origin:50% 0;">Gesamtprüfungswert</div>
<div class="b" style="left:573px;top:619px;width:56px;height:30px;background:#efefef;border-top:1px solid #c6c6c6;border-left:1px solid #c6c6c6;border-right:1px solid #f6f6f6;border-bottom:1px solid #f6f6f6;"></div>
<div class="t k" style="left:301.50px;top:622.04px;font-size:8.2px;line-height:9.84px;font-weight:700;width:600px;text-align:center;transform:scaleX(0.8975609756097562);transform-origin:50% 0;">Standardfehler</div>
<div class="t k" style="left:301.50px;top:631.04px;font-size:8.2px;line-height:9.84px;font-weight:700;width:600px;text-align:center;transform:scaleX(0.8975609756097562);transform-origin:50% 0;">der</div>
<div class="t k" style="left:301.50px;top:640.04px;font-size:8.2px;line-height:9.84px;font-weight:700;width:600px;text-align:center;transform:scaleX(0.8975609756097562);transform-origin:50% 0;">Schätzung</div>
<div class="b" style="left:631px;top:619px;width:79px;height:30px;background:#efefef;border-top:1px solid #c6c6c6;border-left:1px solid #c6c6c6;border-right:1px solid #f6f6f6;border-bottom:1px solid #f6f6f6;"></div>
<div class="t k" style="left:371.00px;top:626.54px;font-size:8.2px;line-height:9.84px;font-weight:700;width:600px;text-align:center;transform:scaleX(0.8975609756097562);transform-origin:50% 0;">Geschätzte</div>
<div class="t k" style="left:371.00px;top:635.54px;font-size:8.2px;line-height:9.84px;font-weight:700;width:600px;text-align:center;transform:scaleX(0.8975609756097562);transform-origin:50% 0;">Standardabweichung</div>
<div class="b" style="left:712px;top:619px;width:35px;height:30px;background:#efefef;border-top:1px solid #c6c6c6;border-left:1px solid #c6c6c6;border-right:1px solid #f6f6f6;border-bottom:1px solid #f6f6f6;"></div>
<div class="t k" style="left:430.00px;top:626.54px;font-size:8.2px;line-height:9.84px;font-weight:700;width:600px;text-align:center;transform:scaleX(0.8975609756097562);transform-origin:50% 0;">Mittlerer</div>
<div class="t k" style="left:430.00px;top:635.54px;font-size:8.2px;line-height:9.84px;font-weight:700;width:600px;text-align:center;transform:scaleX(0.8975609756097562);transform-origin:50% 0;">Fehler</div>
<div class="b" style="left:749px;top:619px;width:49px;height:30px;background:#efefef;border-top:1px solid #c6c6c6;border-left:1px solid #c6c6c6;border-right:1px solid #f6f6f6;border-bottom:1px solid #f6f6f6;"></div>
<div class="t k" style="left:474.00px;top:631.04px;font-size:8.2px;line-height:9.84px;font-weight:700;width:600px;text-align:center;transform:scaleX(0.8975609756097562);transform-origin:50% 0;">Fehleranzahl</div>
<div class="b" style="left:8px;top:651px;width:63px;height:13px;background:#ffffff;border-top:1px solid #c6c6c6;border-left:1px solid #c6c6c6;border-right:1px solid #f6f6f6;border-bottom:1px solid #f6f6f6;"></div>
<div class="t r" style="left:-529.24px;top:655.04px;font-size:8.2px;line-height:9.84px;color:#202020;width:600px;text-align:right;transform:scaleX(0.8772727272727273);transform-origin:100% 0;letter-spacing:0.3px;">1</div>
<div class="b" style="left:73px;top:651px;width:81px;height:13px;background:#ffffff;border-top:1px solid #c6c6c6;border-left:1px solid #c6c6c6;border-right:1px solid #f6f6f6;border-bottom:1px solid #f6f6f6;"></div>
<div class="t r" style="left:75.5px;top:655.04px;font-size:8.2px;line-height:9.84px;color:#202020;transform:scaleX(0.8772727272727272);transform-origin:0 0;letter-spacing:0.3px;">4376,88</div>
<div class="b" style="left:156px;top:651px;width:66px;height:13px;background:#ffffff;border-top:1px solid #c6c6c6;border-left:1px solid #c6c6c6;border-right:1px solid #f6f6f6;border-bottom:1px solid #f6f6f6;"></div>
<div class="t r" style="left:-378.24px;top:655.04px;font-size:8.2px;line-height:9.84px;color:#202020;width:600px;text-align:right;transform:scaleX(0.8772727272727273);transform-origin:100% 0;letter-spacing:0.3px;">1.279</div>
<div class="b" style="left:224px;top:651px;width:66px;height:13px;background:#ffffff;border-top:1px solid #c6c6c6;border-left:1px solid #c6c6c6;border-right:1px solid #f6f6f6;border-bottom:1px solid #f6f6f6;"></div>
<div class="t r" style="left:-310.24px;top:655.04px;font-size:8.2px;line-height:9.84px;color:#202020;width:600px;text-align:right;transform:scaleX(0.8772727272727273);transform-origin:100% 0;letter-spacing:0.3px;">3.382.131,93</div>
<div class="b" style="left:292px;top:651px;width:42px;height:13px;background:#ffffff;border-top:1px solid #c6c6c6;border-left:1px solid #c6c6c6;border-right:1px solid #f6f6f6;border-bottom:1px solid #f6f6f6;"></div>
<div class="t r" style="left:-266.24px;top:655.04px;font-size:8.2px;line-height:9.84px;color:#202020;width:600px;text-align:right;transform:scaleX(0.8772727272727273);transform-origin:100% 0;letter-spacing:0.3px;">37</div>
<div class="b" style="left:336px;top:651px;width:49px;height:13px;background:#ffffff;border-top:1px solid #c6c6c6;border-left:1px solid #c6c6c6;border-right:1px solid #f6f6f6;border-bottom:1px solid #f6f6f6;"></div>
<div class="t r" style="left:-215.24px;top:655.04px;font-size:8.2px;line-height:9.84px;color:#202020;width:600px;text-align:right;transform:scaleX(0.8772727272727273);transform-origin:100% 0;letter-spacing:0.3px;">98.112,90</div>
<div class="b" style="left:387px;top:651px;width:52px;height:13px;background:#ffffff;border-top:1px solid #c6c6c6;border-left:1px solid #c6c6c6;border-right:1px solid #f6f6f6;border-bottom:1px solid #f6f6f6;"></div>
<div class="t r" style="left:-161.24px;top:655.04px;font-size:8.2px;line-height:9.84px;color:#202020;width:600px;text-align:right;transform:scaleX(0.8772727272727273);transform-origin:100% 0;letter-spacing:0.3px;">93.543,23</div>
<div class="b" style="left:441px;top:651px;width:49px;height:13px;background:#ffffff;border-top:1px solid #c6c6c6;border-left:1px solid #c6c6c6;border-right:1px solid #f6f6f6;border-bottom:1px solid #f6f6f6;"></div>
<div class="t r" style="left:-110.24px;top:655.04px;font-size:8.2px;line-height:9.84px;color:#202020;width:600px;text-align:right;transform:scaleX(0.8772727272727273);transform-origin:100% 0;letter-spacing:0.3px;">4.569,67</div>
<div class="b" style="left:492px;top:651px;width:79px;height:13px;background:#ffffff;border-top:1px solid #c6c6c6;border-left:1px solid #c6c6c6;border-right:1px solid #f6f6f6;border-bottom:1px solid #f6f6f6;"></div>
<div class="t r" style="left:-29.24px;top:655.04px;font-size:8.2px;line-height:9.84px;color:#202020;width:600px;text-align:right;transform:scaleX(0.8772727272727273);transform-origin:100% 0;letter-spacing:0.3px;">3.224.169,55</div>
<div class="b" style="left:573px;top:651px;width:56px;height:13px;background:#ffffff;border-top:1px solid #c6c6c6;border-left:1px solid #c6c6c6;border-right:1px solid #f6f6f6;border-bottom:1px solid #f6f6f6;"></div>
<div class="t r" style="left:28.76px;top:655.04px;font-size:8.2px;line-height:9.84px;color:#202020;width:600px;text-align:right;transform:scaleX(0.8772727272727273);transform-origin:100% 0;letter-spacing:0.3px;">138.158,63</div>
<div class="b" style="left:631px;top:651px;width:79px;height:13px;background:#ffffff;border-top:1px solid #c6c6c6;border-left:1px solid #c6c6c6;border-right:1px solid #f6f6f6;border-bottom:1px solid #f6f6f6;"></div>
<div class="t r" style="left:109.76px;top:655.04px;font-size:8.2px;line-height:9.84px;color:#202020;width:600px;text-align:right;transform:scaleX(0.8772727272727273);transform-origin:100% 0;letter-spacing:0.3px;">666,78</div>
<div class="b" style="left:712px;top:651px;width:35px;height:13px;background:#ffffff;border-top:1px solid #c6c6c6;border-left:1px solid #c6c6c6;border-right:1px solid #f6f6f6;border-bottom:1px solid #f6f6f6;"></div>
<div class="t r" style="left:146.76px;top:655.04px;font-size:8.2px;line-height:9.84px;color:#202020;width:600px;text-align:right;transform:scaleX(0.8772727272727272);transform-origin:100% 0;letter-spacing:0.3px;">-123,50</div>
<div class="b" style="left:749px;top:651px;width:49px;height:13px;background:#ffffff;border-top:1px solid #c6c6c6;border-left:1px solid #c6c6c6;border-right:1px solid #f6f6f6;border-bottom:1px solid #f6f6f6;"></div>
<div class="t r" style="left:197.76px;top:655.04px;font-size:8.2px;line-height:9.84px;color:#202020;width:600px;text-align:right;transform:scaleX(0.8772727272727273);transform-origin:100% 0;letter-spacing:0.3px;">3</div>
<div class="b" style="left:8px;top:666px;width:63px;height:13px;background:#ffffff;border-top:1px solid #c6c6c6;border-left:1px solid #c6c6c6;border-right:1px solid #f6f6f6;border-bottom:1px solid #f6f6f6;"></div>
<div class="t r" style="left:-529.24px;top:670.04px;font-size:8.2px;line-height:9.84px;color:#202020;width:600px;text-align:right;transform:scaleX(0.8772727272727273);transform-origin:100% 0;letter-spacing:0.3px;">2</div>
<div class="b" style="left:73px;top:666px;width:81px;height:13px;background:#ffffff;border-top:1px solid #c6c6c6;border-left:1px solid #c6c6c6;border-right:1px solid #f6f6f6;border-bottom:1px solid #f6f6f6;"></div>
<div class="t r" style="left:75.5px;top:670.04px;font-size:8.2px;line-height:9.84px;color:#202020;transform:scaleX(0.8772727272727272);transform-origin:0 0;letter-spacing:0.3px;">9248,74</div>
<div class="b" style="left:156px;top:666px;width:66px;height:13px;background:#ffffff;border-top:1px solid #c6c6c6;border-left:1px solid #c6c6c6;border-right:1px solid #f6f6f6;border-bottom:1px solid #f6f6f6;"></div>
<div class="t r" style="left:-378.24px;top:670.04px;font-size:8.2px;line-height:9.84px;color:#202020;width:600px;text-align:right;transform:scaleX(0.8772727272727273);transform-origin:100% 0;letter-spacing:0.3px;">898</div>
<div class="b" style="left:224px;top:666px;width:66px;height:13px;background:#ffffff;border-top:1px solid #c6c6c6;border-left:1px solid #c6c6c6;border-right:1px solid #f6f6f6;border-bottom:1px solid #f6f6f6;"></div>
<div class="t r" style="left:-310.24px;top:670.04px;font-size:8.2px;line-height:9.84px;color:#202020;width:600px;text-align:right;transform:scaleX(0.8772727272727273);transform-origin:100% 0;letter-spacing:0.3px;">5.693.215,11</div>
<div class="b" style="left:292px;top:666px;width:42px;height:13px;background:#ffffff;border-top:1px solid #c6c6c6;border-left:1px solid #c6c6c6;border-right:1px solid #f6f6f6;border-bottom:1px solid #f6f6f6;"></div>
<div class="t r" style="left:-266.24px;top:670.04px;font-size:8.2px;line-height:9.84px;color:#202020;width:600px;text-align:right;transform:scaleX(0.8772727272727273);transform-origin:100% 0;letter-spacing:0.3px;">36</div>
<div class="b" style="left:336px;top:666px;width:49px;height:13px;background:#ffffff;border-top:1px solid #c6c6c6;border-left:1px solid #c6c6c6;border-right:1px solid #f6f6f6;border-bottom:1px solid #f6f6f6;"></div>
<div class="t r" style="left:-215.24px;top:670.04px;font-size:8.2px;line-height:9.84px;color:#202020;width:600px;text-align:right;transform:scaleX(0.8772727272727273);transform-origin:100% 0;letter-spacing:0.3px;">206.801,51</div>
<div class="b" style="left:387px;top:666px;width:52px;height:13px;background:#ffffff;border-top:1px solid #c6c6c6;border-left:1px solid #c6c6c6;border-right:1px solid #f6f6f6;border-bottom:1px solid #f6f6f6;"></div>
<div class="t r" style="left:-161.24px;top:670.04px;font-size:8.2px;line-height:9.84px;color:#202020;width:600px;text-align:right;transform:scaleX(0.8772727272727273);transform-origin:100% 0;letter-spacing:0.3px;">201.305,97</div>
<div class="b" style="left:441px;top:666px;width:49px;height:13px;background:#ffffff;border-top:1px solid #c6c6c6;border-left:1px solid #c6c6c6;border-right:1px solid #f6f6f6;border-bottom:1px solid #f6f6f6;"></div>
<div class="t r" style="left:-110.24px;top:670.04px;font-size:8.2px;line-height:9.84px;color:#202020;width:600px;text-align:right;transform:scaleX(0.8772727272727273);transform-origin:100% 0;letter-spacing:0.3px;">5.495,54</div>
<div class="b" style="left:492px;top:666px;width:79px;height:13px;background:#ffffff;border-top:1px solid #c6c6c6;border-left:1px solid #c6c6c6;border-right:1px solid #f6f6f6;border-bottom:1px solid #f6f6f6;"></div>
<div class="t r" style="left:-29.24px;top:670.04px;font-size:8.2px;line-height:9.84px;color:#202020;width:600px;text-align:right;transform:scaleX(0.8772727272727273);transform-origin:100% 0;letter-spacing:0.3px;">5.556.131,92</div>
<div class="b" style="left:573px;top:666px;width:56px;height:13px;background:#ffffff;border-top:1px solid #c6c6c6;border-left:1px solid #c6c6c6;border-right:1px solid #f6f6f6;border-bottom:1px solid #f6f6f6;"></div>
<div class="t r" style="left:28.76px;top:670.04px;font-size:8.2px;line-height:9.84px;color:#202020;width:600px;text-align:right;transform:scaleX(0.8772727272727273);transform-origin:100% 0;letter-spacing:0.3px;">111.859,54</div>
<div class="b" style="left:631px;top:666px;width:79px;height:13px;background:#ffffff;border-top:1px solid #c6c6c6;border-left:1px solid #c6c6c6;border-right:1px solid #f6f6f6;border-bottom:1px solid #f6f6f6;"></div>
<div class="t r" style="left:109.76px;top:670.04px;font-size:8.2px;line-height:9.84px;color:#202020;width:600px;text-align:right;transform:scaleX(0.8772727272727273);transform-origin:100% 0;letter-spacing:0.3px;">762,84</div>
<div class="b" style="left:712px;top:666px;width:35px;height:13px;background:#ffffff;border-top:1px solid #c6c6c6;border-left:1px solid #c6c6c6;border-right:1px solid #f6f6f6;border-bottom:1px solid #f6f6f6;"></div>
<div class="t r" style="left:146.76px;top:670.04px;font-size:8.2px;line-height:9.84px;color:#202020;width:600px;text-align:right;transform:scaleX(0.8772727272727272);transform-origin:100% 0;letter-spacing:0.3px;">-152,65</div>
<div class="b" style="left:749px;top:666px;width:49px;height:13px;background:#ffffff;border-top:1px solid #c6c6c6;border-left:1px solid #c6c6c6;border-right:1px solid #f6f6f6;border-bottom:1px solid #f6f6f6;"></div>
<div class="t r" style="left:197.76px;top:670.04px;font-size:8.2px;line-height:9.84px;color:#202020;width:600px;text-align:right;transform:scaleX(0.8772727272727273);transform-origin:100% 0;letter-spacing:0.3px;">3</div>
<div class="b" style="left:8px;top:681px;width:63px;height:13px;background:#ffffff;border-top:1px solid #c6c6c6;border-left:1px solid #c6c6c6;border-right:1px solid #f6f6f6;border-bottom:1px solid #f6f6f6;"></div>
<div class="t r" style="left:-529.24px;top:685.04px;font-size:8.2px;line-height:9.84px;color:#202020;width:600px;text-align:right;transform:scaleX(0.8772727272727273);transform-origin:100% 0;letter-spacing:0.3px;">3</div>
<div class="b" style="left:73px;top:681px;width:81px;height:13px;background:#ffffff;border-top:1px solid #c6c6c6;border-left:1px solid #c6c6c6;border-right:1px solid #f6f6f6;border-bottom:1px solid #f6f6f6;"></div>
<div class="t r" style="left:75.5px;top:685.04px;font-size:8.2px;line-height:9.84px;color:#202020;transform:scaleX(0.8772727272727273);transform-origin:0 0;letter-spacing:0.3px;">16904,52</div>
<div class="b" style="left:156px;top:681px;width:66px;height:13px;background:#ffffff;border-top:1px solid #c6c6c6;border-left:1px solid #c6c6c6;border-right:1px solid #f6f6f6;border-bottom:1px solid #f6f6f6;"></div>
<div class="t r" style="left:-378.24px;top:685.04px;font-size:8.2px;line-height:9.84px;color:#202020;width:600px;text-align:right;transform:scaleX(0.8772727272727273);transform-origin:100% 0;letter-spacing:0.3px;">763</div>
<div class="b" style="left:224px;top:681px;width:66px;height:13px;background:#ffffff;border-top:1px solid #c6c6c6;border-left:1px solid #c6c6c6;border-right:1px solid #f6f6f6;border-bottom:1px solid #f6f6f6;"></div>
<div class="t r" style="left:-310.24px;top:685.04px;font-size:8.2px;line-height:9.84px;color:#202020;width:600px;text-align:right;transform:scaleX(0.8772727272727273);transform-origin:100% 0;letter-spacing:0.3px;">9.987.014,57</div>
<div class="b" style="left:292px;top:681px;width:42px;height:13px;background:#ffffff;border-top:1px solid #c6c6c6;border-left:1px solid #c6c6c6;border-right:1px solid #f6f6f6;border-bottom:1px solid #f6f6f6;"></div>
<div class="t r" style="left:-266.24px;top:685.04px;font-size:8.2px;line-height:9.84px;color:#202020;width:600px;text-align:right;transform:scaleX(0.8772727272727273);transform-origin:100% 0;letter-spacing:0.3px;">49</div>
<div class="b" style="left:336px;top:681px;width:49px;height:13px;background:#ffffff;border-top:1px solid #c6c6c6;border-left:1px solid #c6c6c6;border-right:1px solid #f6f6f6;border-bottom:1px solid #f6f6f6;"></div>
<div class="t r" style="left:-215.24px;top:685.04px;font-size:8.2px;line-height:9.84px;color:#202020;width:600px;text-align:right;transform:scaleX(0.8772727272727273);transform-origin:100% 0;letter-spacing:0.3px;">623.529,81</div>
<div class="b" style="left:387px;top:681px;width:52px;height:13px;background:#ffffff;border-top:1px solid #c6c6c6;border-left:1px solid #c6c6c6;border-right:1px solid #f6f6f6;border-bottom:1px solid #f6f6f6;"></div>
<div class="t r" style="left:-161.24px;top:685.04px;font-size:8.2px;line-height:9.84px;color:#202020;width:600px;text-align:right;transform:scaleX(0.8772727272727273);transform-origin:100% 0;letter-spacing:0.3px;">641.639,81</div>
<div class="b" style="left:441px;top:681px;width:49px;height:13px;background:#ffffff;border-top:1px solid #c6c6c6;border-left:1px solid #c6c6c6;border-right:1px solid #f6f6f6;border-bottom:1px solid #f6f6f6;"></div>
<div class="t r" style="left:-110.24px;top:685.04px;font-size:8.2px;line-height:9.84px;color:#202020;width:600px;text-align:right;transform:scaleX(0.8772727272727273);transform-origin:100% 0;letter-spacing:0.3px;">-18.110,00</div>
<div class="b" style="left:492px;top:681px;width:79px;height:13px;background:#ffffff;border-top:1px solid #c6c6c6;border-left:1px solid #c6c6c6;border-right:1px solid #f6f6f6;border-bottom:1px solid #f6f6f6;"></div>
<div class="t r" style="left:-29.24px;top:685.04px;font-size:8.2px;line-height:9.84px;color:#202020;width:600px;text-align:right;transform:scaleX(0.8772727272727273);transform-origin:100% 0;letter-spacing:0.3px;">10.269.013,14</div>
<div class="b" style="left:573px;top:681px;width:56px;height:13px;background:#ffffff;border-top:1px solid #c6c6c6;border-left:1px solid #c6c6c6;border-right:1px solid #f6f6f6;border-bottom:1px solid #f6f6f6;"></div>
<div class="t r" style="left:28.76px;top:685.04px;font-size:8.2px;line-height:9.84px;color:#202020;width:600px;text-align:right;transform:scaleX(0.8772727272727273);transform-origin:100% 0;letter-spacing:0.3px;">271.106,07</div>
<div class="b" style="left:631px;top:681px;width:79px;height:13px;background:#ffffff;border-top:1px solid #c6c6c6;border-left:1px solid #c6c6c6;border-right:1px solid #f6f6f6;border-bottom:1px solid #f6f6f6;"></div>
<div class="t r" style="left:109.76px;top:685.04px;font-size:8.2px;line-height:9.84px;color:#202020;width:600px;text-align:right;transform:scaleX(0.8772727272727273);transform-origin:100% 0;letter-spacing:0.3px;">2.571,14</div>
<div class="b" style="left:712px;top:681px;width:35px;height:13px;background:#ffffff;border-top:1px solid #c6c6c6;border-left:1px solid #c6c6c6;border-right:1px solid #f6f6f6;border-bottom:1px solid #f6f6f6;"></div>
<div class="t r" style="left:146.76px;top:685.04px;font-size:8.2px;line-height:9.84px;color:#202020;width:600px;text-align:right;transform:scaleX(0.8772727272727273);transform-origin:100% 0;letter-spacing:0.3px;">369,59</div>
<div class="b" style="left:749px;top:681px;width:49px;height:13px;background:#ffffff;border-top:1px solid #c6c6c6;border-left:1px solid #c6c6c6;border-right:1px solid #f6f6f6;border-bottom:1px solid #f6f6f6;"></div>
<div class="t r" style="left:197.76px;top:685.04px;font-size:8.2px;line-height:9.84px;color:#202020;width:600px;text-align:right;transform:scaleX(0.8772727272727273);transform-origin:100% 0;letter-spacing:0.3px;">3</div>
<div class="b" style="left:8px;top:696px;width:63px;height:13px;background:#ffffff;border-top:1px solid #c6c6c6;border-left:1px solid #c6c6c6;border-right:1px solid #f6f6f6;border-bottom:1px solid #f6f6f6;"></div>
<div class="t r" style="left:-529.24px;top:700.04px;font-size:8.2px;line-height:9.84px;color:#202020;width:600px;text-align:right;transform:scaleX(0.8772727272727273);transform-origin:100% 0;letter-spacing:0.3px;">4</div>
<div class="b" style="left:73px;top:696px;width:81px;height:13px;background:#ffffff;border-top:1px solid #c6c6c6;border-left:1px solid #c6c6c6;border-right:1px solid #f6f6f6;border-bottom:1px solid #f6f6f6;"></div>
<div class="t r" style="left:75.5px;top:700.04px;font-size:8.2px;line-height:9.84px;color:#202020;transform:scaleX(0.8772727272727273);transform-origin:0 0;letter-spacing:0.3px;">23864,32</div>
<div class="b" style="left:156px;top:696px;width:66px;height:13px;background:#ffffff;border-top:1px solid #c6c6c6;border-left:1px solid #c6c6c6;border-right:1px solid #f6f6f6;border-bottom:1px solid #f6f6f6;"></div>
<div class="t r" style="left:-378.24px;top:700.04px;font-size:8.2px;line-height:9.84px;color:#202020;width:600px;text-align:right;transform:scaleX(0.8772727272727273);transform-origin:100% 0;letter-spacing:0.3px;">627</div>
<div class="b" style="left:224px;top:696px;width:66px;height:13px;background:#ffffff;border-top:1px solid #c6c6c6;border-left:1px solid #c6c6c6;border-right:1px solid #f6f6f6;border-bottom:1px solid #f6f6f6;"></div>
<div class="t r" style="left:-310.24px;top:700.04px;font-size:8.2px;line-height:9.84px;color:#202020;width:600px;text-align:right;transform:scaleX(0.8772727272727273);transform-origin:100% 0;letter-spacing:0.3px;">12.657.163,59</div>
<div class="b" style="left:292px;top:696px;width:42px;height:13px;background:#ffffff;border-top:1px solid #c6c6c6;border-left:1px solid #c6c6c6;border-right:1px solid #f6f6f6;border-bottom:1px solid #f6f6f6;"></div>
<div class="t r" style="left:-266.24px;top:700.04px;font-size:8.2px;line-height:9.84px;color:#202020;width:600px;text-align:right;transform:scaleX(0.8772727272727273);transform-origin:100% 0;letter-spacing:0.3px;">36</div>
<div class="b" style="left:336px;top:696px;width:49px;height:13px;background:#ffffff;border-top:1px solid #c6c6c6;border-left:1px solid #c6c6c6;border-right:1px solid #f6f6f6;border-bottom:1px solid #f6f6f6;"></div>
<div class="t r" style="left:-215.24px;top:700.04px;font-size:8.2px;line-height:9.84px;color:#202020;width:600px;text-align:right;transform:scaleX(0.8772727272727273);transform-origin:100% 0;letter-spacing:0.3px;">723.926,60</div>
<div class="b" style="left:387px;top:696px;width:52px;height:13px;background:#ffffff;border-top:1px solid #c6c6c6;border-left:1px solid #c6c6c6;border-right:1px solid #f6f6f6;border-bottom:1px solid #f6f6f6;"></div>
<div class="t r" style="left:-161.24px;top:700.04px;font-size:8.2px;line-height:9.84px;color:#202020;width:600px;text-align:right;transform:scaleX(0.8772727272727273);transform-origin:100% 0;letter-spacing:0.3px;">723.870,10</div>
<div class="b" style="left:441px;top:696px;width:49px;height:13px;background:#ffffff;border-top:1px solid #c6c6c6;border-left:1px solid #c6c6c6;border-right:1px solid #f6f6f6;border-bottom:1px solid #f6f6f6;"></div>
<div class="t r" style="left:-110.24px;top:700.04px;font-size:8.2px;line-height:9.84px;color:#202020;width:600px;text-align:right;transform:scaleX(0.8772727272727273);transform-origin:100% 0;letter-spacing:0.3px;">56,50</div>
<div class="b" style="left:492px;top:696px;width:79px;height:13px;background:#ffffff;border-top:1px solid #c6c6c6;border-left:1px solid #c6c6c6;border-right:1px solid #f6f6f6;border-bottom:1px solid #f6f6f6;"></div>
<div class="t r" style="left:-29.24px;top:700.04px;font-size:8.2px;line-height:9.84px;color:#202020;width:600px;text-align:right;transform:scaleX(0.8772727272727273);transform-origin:100% 0;letter-spacing:0.3px;">12.656.179,55</div>
<div class="b" style="left:573px;top:696px;width:56px;height:13px;background:#ffffff;border-top:1px solid #c6c6c6;border-left:1px solid #c6c6c6;border-right:1px solid #f6f6f6;border-bottom:1px solid #f6f6f6;"></div>
<div class="t r" style="left:28.76px;top:700.04px;font-size:8.2px;line-height:9.84px;color:#202020;width:600px;text-align:right;transform:scaleX(0.8772727272727273);transform-origin:100% 0;letter-spacing:0.3px;">6.738,62</div>
<div class="b" style="left:631px;top:696px;width:79px;height:13px;background:#ffffff;border-top:1px solid #c6c6c6;border-left:1px solid #c6c6c6;border-right:1px solid #f6f6f6;border-bottom:1px solid #f6f6f6;"></div>
<div class="t r" style="left:109.76px;top:700.04px;font-size:8.2px;line-height:9.84px;color:#202020;width:600px;text-align:right;transform:scaleX(0.8772727272727273);transform-origin:100% 0;letter-spacing:0.3px;">66,42</div>
<div class="b" style="left:712px;top:696px;width:35px;height:13px;background:#ffffff;border-top:1px solid #c6c6c6;border-left:1px solid #c6c6c6;border-right:1px solid #f6f6f6;border-bottom:1px solid #f6f6f6;"></div>
<div class="t r" style="left:146.76px;top:700.04px;font-size:8.2px;line-height:9.84px;color:#202020;width:600px;text-align:right;transform:scaleX(0.8772727272727273);transform-origin:100% 0;letter-spacing:0.3px;">-1,57</div>
<div class="b" style="left:749px;top:696px;width:49px;height:13px;background:#ffffff;border-top:1px solid #c6c6c6;border-left:1px solid #c6c6c6;border-right:1px solid #f6f6f6;border-bottom:1px solid #f6f6f6;"></div>
<div class="t r" style="left:197.76px;top:700.04px;font-size:8.2px;line-height:9.84px;color:#202020;width:600px;text-align:right;transform:scaleX(0.8772727272727273);transform-origin:100% 0;letter-spacing:0.3px;">3</div>
<div class="b" style="left:8px;top:711px;width:63px;height:13px;background:#ffffff;border-top:1px solid #c6c6c6;border-left:1px solid #c6c6c6;border-right:1px solid #f6f6f6;border-bottom:1px solid #f6f6f6;"></div>
<div class="t r" style="left:-529.24px;top:715.04px;font-size:8.2px;line-height:9.84px;color:#202020;width:600px;text-align:right;transform:scaleX(0.8772727272727273);transform-origin:100% 0;letter-spacing:0.3px;">5</div>
<div class="b" style="left:73px;top:711px;width:81px;height:13px;background:#ffffff;border-top:1px solid #c6c6c6;border-left:1px solid #c6c6c6;border-right:1px solid #f6f6f6;border-bottom:1px solid #f6f6f6;"></div>
<div class="t r" style="left:75.5px;top:715.04px;font-size:8.2px;line-height:9.84px;color:#202020;transform:scaleX(0.8772727272727273);transform-origin:0 0;letter-spacing:0.3px;">&lt; 35000,00</div>
<div class="b" style="left:156px;top:711px;width:66px;height:13px;background:#ffffff;border-top:1px solid #c6c6c6;border-left:1px solid #c6c6c6;border-right:1px solid #f6f6f6;border-bottom:1px solid #f6f6f6;"></div>
<div class="t r" style="left:-378.24px;top:715.04px;font-size:8.2px;line-height:9.84px;color:#202020;width:600px;text-align:right;transform:scaleX(0.8772727272727273);transform-origin:100% 0;letter-spacing:0.3px;">479</div>
<div class="b" style="left:224px;top:711px;width:66px;height:13px;background:#ffffff;border-top:1px solid #c6c6c6;border-left:1px solid #c6c6c6;border-right:1px solid #f6f6f6;border-bottom:1px solid #f6f6f6;"></div>
<div class="t r" style="left:-310.24px;top:715.04px;font-size:8.2px;line-height:9.84px;color:#202020;width:600px;text-align:right;transform:scaleX(0.8772727272727273);transform-origin:100% 0;letter-spacing:0.3px;">13.346.354,63</div>
<div class="b" style="left:292px;top:711px;width:42px;height:13px;background:#ffffff;border-top:1px solid #c6c6c6;border-left:1px solid #c6c6c6;border-right:1px solid #f6f6f6;border-bottom:1px solid #f6f6f6;"></div>
<div class="t r" style="left:-266.24px;top:715.04px;font-size:8.2px;line-height:9.84px;color:#202020;width:600px;text-align:right;transform:scaleX(0.8772727272727273);transform-origin:100% 0;letter-spacing:0.3px;">39</div>
<div class="b" style="left:336px;top:711px;width:49px;height:13px;background:#ffffff;border-top:1px solid #c6c6c6;border-left:1px solid #c6c6c6;border-right:1px solid #f6f6f6;border-bottom:1px solid #f6f6f6;"></div>
<div class="t r" style="left:-215.24px;top:715.04px;font-size:8.2px;line-height:9.84px;color:#202020;width:600px;text-align:right;transform:scaleX(0.8772727272727273);transform-origin:100% 0;letter-spacing:0.3px;">1.069.044,86</div>
<div class="b" style="left:387px;top:711px;width:52px;height:13px;background:#ffffff;border-top:1px solid #c6c6c6;border-left:1px solid #c6c6c6;border-right:1px solid #f6f6f6;border-bottom:1px solid #f6f6f6;"></div>
<div class="t r" style="left:-161.24px;top:715.04px;font-size:8.2px;line-height:9.84px;color:#202020;width:600px;text-align:right;transform:scaleX(0.8772727272727273);transform-origin:100% 0;letter-spacing:0.3px;">1.059.037,28</div>
<div class="b" style="left:441px;top:711px;width:49px;height:13px;background:#ffffff;border-top:1px solid #c6c6c6;border-left:1px solid #c6c6c6;border-right:1px solid #f6f6f6;border-bottom:1px solid #f6f6f6;"></div>
<div class="t r" style="left:-110.24px;top:715.04px;font-size:8.2px;line-height:9.84px;color:#202020;width:600px;text-align:right;transform:scaleX(0.8772727272727273);transform-origin:100% 0;letter-spacing:0.3px;">10.007,58</div>
<div class="b" style="left:492px;top:711px;width:79px;height:13px;background:#ffffff;border-top:1px solid #c6c6c6;border-left:1px solid #c6c6c6;border-right:1px solid #f6f6f6;border-bottom:1px solid #f6f6f6;"></div>
<div class="t r" style="left:-29.24px;top:715.04px;font-size:8.2px;line-height:9.84px;color:#202020;width:600px;text-align:right;transform:scaleX(0.8772727272727273);transform-origin:100% 0;letter-spacing:0.3px;">13.223.441,02</div>
<div class="b" style="left:573px;top:711px;width:56px;height:13px;background:#ffffff;border-top:1px solid #c6c6c6;border-left:1px solid #c6c6c6;border-right:1px solid #f6f6f6;border-bottom:1px solid #f6f6f6;"></div>
<div class="t r" style="left:28.76px;top:715.04px;font-size:8.2px;line-height:9.84px;color:#202020;width:600px;text-align:right;transform:scaleX(0.8772727272727273);transform-origin:100% 0;letter-spacing:0.3px;">117.712,04</div>
<div class="b" style="left:631px;top:711px;width:79px;height:13px;background:#ffffff;border-top:1px solid #c6c6c6;border-left:1px solid #c6c6c6;border-right:1px solid #f6f6f6;border-bottom:1px solid #f6f6f6;"></div>
<div class="t r" style="left:109.76px;top:715.04px;font-size:8.2px;line-height:9.84px;color:#202020;width:600px;text-align:right;transform:scaleX(0.8772727272727273);transform-origin:100% 0;letter-spacing:0.3px;">1.601,25</div>
<div class="b" style="left:712px;top:711px;width:35px;height:13px;background:#ffffff;border-top:1px solid #c6c6c6;border-left:1px solid #c6c6c6;border-right:1px solid #f6f6f6;border-bottom:1px solid #f6f6f6;"></div>
<div class="t r" style="left:146.76px;top:715.04px;font-size:8.2px;line-height:9.84px;color:#202020;width:600px;text-align:right;transform:scaleX(0.8772727272727272);transform-origin:100% 0;letter-spacing:0.3px;">-256,60</div>
<div class="b" style="left:749px;top:711px;width:49px;height:13px;background:#ffffff;border-top:1px solid #c6c6c6;border-left:1px solid #c6c6c6;border-right:1px solid #f6f6f6;border-bottom:1px solid #f6f6f6;"></div>
<div class="t r" style="left:197.76px;top:715.04px;font-size:8.2px;line-height:9.84px;color:#202020;width:600px;text-align:right;transform:scaleX(0.8772727272727273);transform-origin:100% 0;letter-spacing:0.3px;">3</div>
<div class="b" style="left:8px;top:726px;width:63px;height:13px;background:#efefef;border-top:1px solid #c6c6c6;border-left:1px solid #c6c6c6;border-right:1px solid #f6f6f6;border-bottom:1px solid #f6f6f6;"></div>
<div class="t k" style="left:-260.00px;top:730.04px;font-size:8.2px;line-height:9.84px;font-weight:700;width:600px;text-align:center;transform:scaleX(0.8975609756097562);transform-origin:50% 0;">Zwischensumme</div>
<div class="b" style="left:73px;top:726px;width:81px;height:13px;background:#efefef;border-top:1px solid #c6c6c6;border-left:1px solid #c6c6c6;border-right:1px solid #f6f6f6;border-bottom:1px solid #f6f6f6;"></div>
<div class="b" style="left:156px;top:726px;width:66px;height:13px;background:#efefef;border-top:1px solid #c6c6c6;border-left:1px solid #c6c6c6;border-right:1px solid #f6f6f6;border-bottom:1px solid #f6f6f6;"></div>
<div class="t k" style="left:-379.50px;top:730.04px;font-size:8.2px;line-height:9.84px;font-weight:700;width:600px;text-align:right;transform:scaleX(0.8975609756097562);transform-origin:100% 0;">4.046</div>
<div class="b" style="left:224px;top:726px;width:66px;height:13px;background:#efefef;border-top:1px solid #c6c6c6;border-left:1px solid #c6c6c6;border-right:1px solid #f6f6f6;border-bottom:1px solid #f6f6f6;"></div>
<div class="t k" style="left:-311.50px;top:730.04px;font-size:8.2px;line-height:9.84px;font-weight:700;width:600px;text-align:right;transform:scaleX(0.8975609756097562);transform-origin:100% 0;">45.065.879,83</div>
<div class="b" style="left:292px;top:726px;width:42px;height:13px;background:#efefef;border-top:1px solid #c6c6c6;border-left:1px solid #c6c6c6;border-right:1px solid #f6f6f6;border-bottom:1px solid #f6f6f6;"></div>
<div class="t k" style="left:-267.50px;top:730.04px;font-size:8.2px;line-height:9.84px;font-weight:700;width:600px;text-align:right;transform:scaleX(0.8975609756097562);transform-origin:100% 0;">197</div>
<div class="b" style="left:336px;top:726px;width:49px;height:13px;background:#efefef;border-top:1px solid #c6c6c6;border-left:1px solid #c6c6c6;border-right:1px solid #f6f6f6;border-bottom:1px solid #f6f6f6;"></div>
<div class="t k" style="left:-216.50px;top:730.04px;font-size:8.2px;line-height:9.84px;font-weight:700;width:600px;text-align:right;transform:scaleX(0.8975609756097562);transform-origin:100% 0;">2.721.415,68</div>
<div class="b" style="left:387px;top:726px;width:52px;height:13px;background:#efefef;border-top:1px solid #c6c6c6;border-left:1px solid #c6c6c6;border-right:1px solid #f6f6f6;border-bottom:1px solid #f6f6f6;"></div>
<div class="t k" style="left:-162.50px;top:730.04px;font-size:8.2px;line-height:9.84px;font-weight:700;width:600px;text-align:right;transform:scaleX(0.8975609756097562);transform-origin:100% 0;">2.719.396,39</div>
<div class="b" style="left:441px;top:726px;width:49px;height:13px;background:#efefef;border-top:1px solid #c6c6c6;border-left:1px solid #c6c6c6;border-right:1px solid #f6f6f6;border-bottom:1px solid #f6f6f6;"></div>
<div class="t k" style="left:-111.50px;top:730.04px;font-size:8.2px;line-height:9.84px;font-weight:700;width:600px;text-align:right;transform:scaleX(0.8975609756097562);transform-origin:100% 0;">2.019,29</div>
<div class="b" style="left:492px;top:726px;width:79px;height:13px;background:#efefef;border-top:1px solid #c6c6c6;border-left:1px solid #c6c6c6;border-right:1px solid #f6f6f6;border-bottom:1px solid #f6f6f6;"></div>
<div class="t k" style="left:-30.50px;top:730.04px;font-size:8.2px;line-height:9.84px;font-weight:700;width:600px;text-align:right;transform:scaleX(0.8975609756097562);transform-origin:100% 0;">44.928.935,18</div>
<div class="b" style="left:573px;top:726px;width:56px;height:13px;background:#efefef;border-top:1px solid #c6c6c6;border-left:1px solid #c6c6c6;border-right:1px solid #f6f6f6;border-bottom:1px solid #f6f6f6;"></div>
<div class="t k" style="left:27.50px;top:730.04px;font-size:8.2px;line-height:9.84px;font-weight:700;width:600px;text-align:right;transform:scaleX(0.8975609756097562);transform-origin:100% 0;">344.964,34</div>
<div class="b" style="left:631px;top:726px;width:79px;height:13px;background:#efefef;border-top:1px solid #c6c6c6;border-left:1px solid #c6c6c6;border-right:1px solid #f6f6f6;border-bottom:1px solid #f6f6f6;"></div>
<div class="t k" style="left:108.50px;top:730.04px;font-size:8.2px;line-height:9.84px;font-weight:700;width:600px;text-align:right;transform:scaleX(0.8975609756097562);transform-origin:100% 0;">5.668,43</div>
<div class="b" style="left:712px;top:726px;width:35px;height:13px;background:#efefef;border-top:1px solid #c6c6c6;border-left:1px solid #c6c6c6;border-right:1px solid #f6f6f6;border-bottom:1px solid #f6f6f6;"></div>
<div class="t k" style="left:145.50px;top:730.04px;font-size:8.2px;line-height:9.84px;font-weight:700;width:600px;text-align:right;transform:scaleX(0.8975609756097562);transform-origin:100% 0;">-164,74</div>
<div class="b" style="left:749px;top:726px;width:49px;height:13px;background:#efefef;border-top:1px solid #c6c6c6;border-left:1px solid #c6c6c6;border-right:1px solid #f6f6f6;border-bottom:1px solid #f6f6f6;"></div>
<div class="t k" style="left:196.50px;top:730.04px;font-size:8.2px;line-height:9.84px;font-weight:700;width:600px;text-align:right;transform:scaleX(0.8975609756097562);transform-origin:100% 0;">15</div>
<div class="b" style="left:8px;top:741px;width:63px;height:13px;background:#efefef;border-top:1px solid #c6c6c6;border-left:1px solid #c6c6c6;border-right:1px solid #f6f6f6;border-bottom:1px solid #f6f6f6;"></div>
<div class="t k" style="left:-260.00px;top:745.04px;font-size:8.2px;line-height:9.84px;font-weight:700;width:600px;text-align:center;transform:scaleX(0.8975609756097562);transform-origin:50% 0;">Oberer Rand</div>
<div class="b" style="left:73px;top:741px;width:81px;height:13px;background:#ffffff;border-top:1px solid #c6c6c6;border-left:1px solid #c6c6c6;border-right:1px solid #f6f6f6;border-bottom:1px solid #f6f6f6;"></div>
<div class="t r" style="left:75.5px;top:745.04px;font-size:8.2px;line-height:9.84px;color:#202020;transform:scaleX(0.8772727272727274);transform-origin:0 0;letter-spacing:0.3px;">&gt;= 35000,00</div>
<div class="b" style="left:156px;top:741px;width:66px;height:13px;background:#ffffff;border-top:1px solid #c6c6c6;border-left:1px solid #c6c6c6;border-right:1px solid #f6f6f6;border-bottom:1px solid #f6f6f6;"></div>
<div class="t r" style="left:-378.24px;top:745.04px;font-size:8.2px;line-height:9.84px;color:#202020;width:600px;text-align:right;transform:scaleX(0.8772727272727273);transform-origin:100% 0;letter-spacing:0.3px;">36</div>
<div class="b" style="left:224px;top:741px;width:66px;height:13px;background:#ffffff;border-top:1px solid #c6c6c6;border-left:1px solid #c6c6c6;border-right:1px solid #f6f6f6;border-bottom:1px solid #f6f6f6;"></div>
<div class="t r" style="left:-310.24px;top:745.04px;font-size:8.2px;line-height:9.84px;color:#202020;width:600px;text-align:right;transform:scaleX(0.8772727272727273);transform-origin:100% 0;letter-spacing:0.3px;">1.334.318,88</div>
<div class="b" style="left:292px;top:741px;width:42px;height:13px;background:#ffffff;border-top:1px solid #c6c6c6;border-left:1px solid #c6c6c6;border-right:1px solid #f6f6f6;border-bottom:1px solid #f6f6f6;"></div>
<div class="t r" style="left:-266.24px;top:745.04px;font-size:8.2px;line-height:9.84px;color:#202020;width:600px;text-align:right;transform:scaleX(0.8772727272727273);transform-origin:100% 0;letter-spacing:0.3px;">36</div>
<div class="b" style="left:336px;top:741px;width:49px;height:13px;background:#ffffff;border-top:1px solid #c6c6c6;border-left:1px solid #c6c6c6;border-right:1px solid #f6f6f6;border-bottom:1px solid #f6f6f6;"></div>
<div class="t r" style="left:-215.24px;top:745.04px;font-size:8.2px;line-height:9.84px;color:#202020;width:600px;text-align:right;transform:scaleX(0.8772727272727273);transform-origin:100% 0;letter-spacing:0.3px;">1.334.318,88</div>
<div class="b" style="left:387px;top:741px;width:52px;height:13px;background:#ffffff;border-top:1px solid #c6c6c6;border-left:1px solid #c6c6c6;border-right:1px solid #f6f6f6;border-bottom:1px solid #f6f6f6;"></div>
<div class="t r" style="left:-161.24px;top:745.04px;font-size:8.2px;line-height:9.84px;color:#202020;width:600px;text-align:right;transform:scaleX(0.8772727272727273);transform-origin:100% 0;letter-spacing:0.3px;">1.324.318,88</div>
<div class="b" style="left:441px;top:741px;width:49px;height:13px;background:#ffffff;border-top:1px solid #c6c6c6;border-left:1px solid #c6c6c6;border-right:1px solid #f6f6f6;border-bottom:1px solid #f6f6f6;"></div>
<div class="t r" style="left:-110.24px;top:745.04px;font-size:8.2px;line-height:9.84px;color:#202020;width:600px;text-align:right;transform:scaleX(0.8772727272727273);transform-origin:100% 0;letter-spacing:0.3px;">10.000,00</div>
<div class="b" style="left:492px;top:741px;width:79px;height:13px;background:#ffffff;border-top:1px solid #c6c6c6;border-left:1px solid #c6c6c6;border-right:1px solid #f6f6f6;border-bottom:1px solid #f6f6f6;"></div>
<div class="t r" style="left:-29.24px;top:745.04px;font-size:8.2px;line-height:9.84px;color:#202020;width:600px;text-align:right;transform:scaleX(0.8772727272727273);transform-origin:100% 0;letter-spacing:0.3px;">1.324.318,88</div>
<div class="b" style="left:573px;top:741px;width:56px;height:13px;background:#ffffff;border-top:1px solid #c6c6c6;border-left:1px solid #c6c6c6;border-right:1px solid #f6f6f6;border-bottom:1px solid #f6f6f6;"></div>
<div class="t r" style="left:28.76px;top:745.04px;font-size:8.2px;line-height:9.84px;color:#202020;width:600px;text-align:right;transform:scaleX(0.8772727272727273);transform-origin:100% 0;letter-spacing:0.3px;">0,00</div>
<div class="b" style="left:631px;top:741px;width:79px;height:13px;background:#ffffff;border-top:1px solid #c6c6c6;border-left:1px solid #c6c6c6;border-right:1px solid #f6f6f6;border-bottom:1px solid #f6f6f6;"></div>
<div class="t r" style="left:109.76px;top:745.04px;font-size:8.2px;line-height:9.84px;color:#202020;width:600px;text-align:right;transform:scaleX(0.8772727272727273);transform-origin:100% 0;letter-spacing:0.3px;">0,00</div>
<div class="b" style="left:712px;top:741px;width:35px;height:13px;background:#ffffff;border-top:1px solid #c6c6c6;border-left:1px solid #c6c6c6;border-right:1px solid #f6f6f6;border-bottom:1px solid #f6f6f6;"></div>
<div class="t r" style="left:146.76px;top:745.04px;font-size:8.2px;line-height:9.84px;color:#202020;width:600px;text-align:right;transform:scaleX(0.8772727272727272);transform-origin:100% 0;letter-spacing:0.3px;">-277,78</div>
<div class="b" style="left:749px;top:741px;width:49px;height:13px;background:#ffffff;border-top:1px solid #c6c6c6;border-left:1px solid #c6c6c6;border-right:1px solid #f6f6f6;border-bottom:1px solid #f6f6f6;"></div>
<div class="t r" style="left:197.76px;top:745.04px;font-size:8.2px;line-height:9.84px;color:#202020;width:600px;text-align:right;transform:scaleX(0.8772727272727273);transform-origin:100% 0;letter-spacing:0.3px;">1</div>
<div class="b" style="left:8px;top:756px;width:63px;height:12px;background:#efefef;border-top:1px solid #c6c6c6;border-left:1px solid #c6c6c6;border-right:1px solid #f6f6f6;border-bottom:1px solid #f6f6f6;"></div>
<div class="t k" style="left:-260.00px;top:760.04px;font-size:8.2px;line-height:9.84px;font-weight:700;width:600px;text-align:center;transform:scaleX(0.8975609756097562);transform-origin:50% 0;">Summe</div>
<div class="b" style="left:73px;top:756px;width:81px;height:12px;background:#efefef;border-top:1px solid #c6c6c6;border-left:1px solid #c6c6c6;border-right:1px solid #f6f6f6;border-bottom:1px solid #f6f6f6;"></div>
<div class="b" style="left:156px;top:756px;width:66px;height:12px;background:#efefef;border-top:1px solid #c6c6c6;border-left:1px solid #c6c6c6;border-right:1px solid #f6f6f6;border-bottom:1px solid #f6f6f6;"></div>
<div class="t k" style="left:-379.50px;top:760.04px;font-size:8.2px;line-height:9.84px;font-weight:700;width:600px;text-align:right;transform:scaleX(0.8975609756097562);transform-origin:100% 0;">4.082</div>
<div class="b" style="left:224px;top:756px;width:66px;height:12px;background:#efefef;border-top:1px solid #c6c6c6;border-left:1px solid #c6c6c6;border-right:1px solid #f6f6f6;border-bottom:1px solid #f6f6f6;"></div>
<div class="t k" style="left:-311.50px;top:760.04px;font-size:8.2px;line-height:9.84px;font-weight:700;width:600px;text-align:right;transform:scaleX(0.8975609756097562);transform-origin:100% 0;">46.400.198,71</div>
<div class="b" style="left:292px;top:756px;width:42px;height:12px;background:#efefef;border-top:1px solid #c6c6c6;border-left:1px solid #c6c6c6;border-right:1px solid #f6f6f6;border-bottom:1px solid #f6f6f6;"></div>
<div class="t k" style="left:-267.50px;top:760.04px;font-size:8.2px;line-height:9.84px;font-weight:700;width:600px;text-align:right;transform:scaleX(0.8975609756097562);transform-origin:100% 0;">233</div>
<div class="b" style="left:336px;top:756px;width:49px;height:12px;background:#efefef;border-top:1px solid #c6c6c6;border-left:1px solid #c6c6c6;border-right:1px solid #f6f6f6;border-bottom:1px solid #f6f6f6;"></div>
<div class="t k" style="left:-216.50px;top:760.04px;font-size:8.2px;line-height:9.84px;font-weight:700;width:600px;text-align:right;transform:scaleX(0.8975609756097562);transform-origin:100% 0;">4.055.734,56</div>
<div class="b" style="left:387px;top:756px;width:52px;height:12px;background:#efefef;border-top:1px solid #c6c6c6;border-left:1px solid #c6c6c6;border-right:1px solid #f6f6f6;border-bottom:1px solid #f6f6f6;"></div>
<div class="t k" style="left:-162.50px;top:760.04px;font-size:8.2px;line-height:9.84px;font-weight:700;width:600px;text-align:right;transform:scaleX(0.8975609756097562);transform-origin:100% 0;">4.043.715,27</div>
<div class="b" style="left:441px;top:756px;width:49px;height:12px;background:#efefef;border-top:1px solid #c6c6c6;border-left:1px solid #c6c6c6;border-right:1px solid #f6f6f6;border-bottom:1px solid #f6f6f6;"></div>
<div class="t k" style="left:-111.50px;top:760.04px;font-size:8.2px;line-height:9.84px;font-weight:700;width:600px;text-align:right;transform:scaleX(0.8975609756097562);transform-origin:100% 0;">12.019,29</div>
<div class="b" style="left:492px;top:756px;width:79px;height:12px;background:#efefef;border-top:1px solid #c6c6c6;border-left:1px solid #c6c6c6;border-right:1px solid #f6f6f6;border-bottom:1px solid #f6f6f6;"></div>
<div class="t k" style="left:-30.50px;top:760.04px;font-size:8.2px;line-height:9.84px;font-weight:700;width:600px;text-align:right;transform:scaleX(0.8975609756097562);transform-origin:100% 0;">46.253.254,06</div>
<div class="b" style="left:573px;top:756px;width:56px;height:12px;background:#efefef;border-top:1px solid #c6c6c6;border-left:1px solid #c6c6c6;border-right:1px solid #f6f6f6;border-bottom:1px solid #f6f6f6;"></div>
<div class="t k" style="left:27.50px;top:760.04px;font-size:8.2px;line-height:9.84px;font-weight:700;width:600px;text-align:right;transform:scaleX(0.8975609756097562);transform-origin:100% 0;">344.964,34</div>
<div class="b" style="left:631px;top:756px;width:79px;height:12px;background:#efefef;border-top:1px solid #c6c6c6;border-left:1px solid #c6c6c6;border-right:1px solid #f6f6f6;border-bottom:1px solid #f6f6f6;"></div>
<div class="t k" style="left:108.50px;top:760.04px;font-size:8.2px;line-height:9.84px;font-weight:700;width:600px;text-align:right;transform:scaleX(0.8975609756097562);transform-origin:100% 0;">5.668,43</div>
<div class="b" style="left:712px;top:756px;width:35px;height:12px;background:#efefef;border-top:1px solid #c6c6c6;border-left:1px solid #c6c6c6;border-right:1px solid #f6f6f6;border-bottom:1px solid #f6f6f6;"></div>
<div class="t k" style="left:145.50px;top:760.04px;font-size:8.2px;line-height:9.84px;font-weight:700;width:600px;text-align:right;transform:scaleX(0.8975609756097562);transform-origin:100% 0;">-442,52</div>
<div class="b" style="left:749px;top:756px;width:49px;height:12px;background:#efefef;border-top:1px solid #c6c6c6;border-left:1px solid #c6c6c6;border-right:1px solid #f6f6f6;border-bottom:1px solid #f6f6f6;"></div>
<div class="t k" style="left:196.50px;top:760.04px;font-size:8.2px;line-height:9.84px;font-weight:700;width:600px;text-align:right;transform:scaleX(0.8975609756097562);transform-origin:100% 0;">16</div>
<div class="b" style="left:223px;top:618px;width:66px;height:29px;border:2px solid #fb3434;"></div>
<div class="b" style="left:223px;top:755px;width:66px;height:13px;border:2px solid #fb3434;"></div>
<div class="b" style="left:14px;top:567.5px;width:4px;height:1px;background:#f1f1f1;"></div>
<div class="b" style="left:24px;top:567.5px;width:4px;height:1px;background:#f1f1f1;"></div>
<div class="b" style="left:14px;top:777.5px;width:4px;height:1px;background:#f1f1f1;"></div>
<div class="b" style="left:24px;top:777.5px;width:4px;height:1px;background:#f1f1f1;"></div>
<div class="t r" style="left:703px;top:782.55px;font-size:14px;line-height:16.80px;color:#d4d4d4;-webkit-text-stroke:0;">Windows aktivieren</div>
</body></html>
